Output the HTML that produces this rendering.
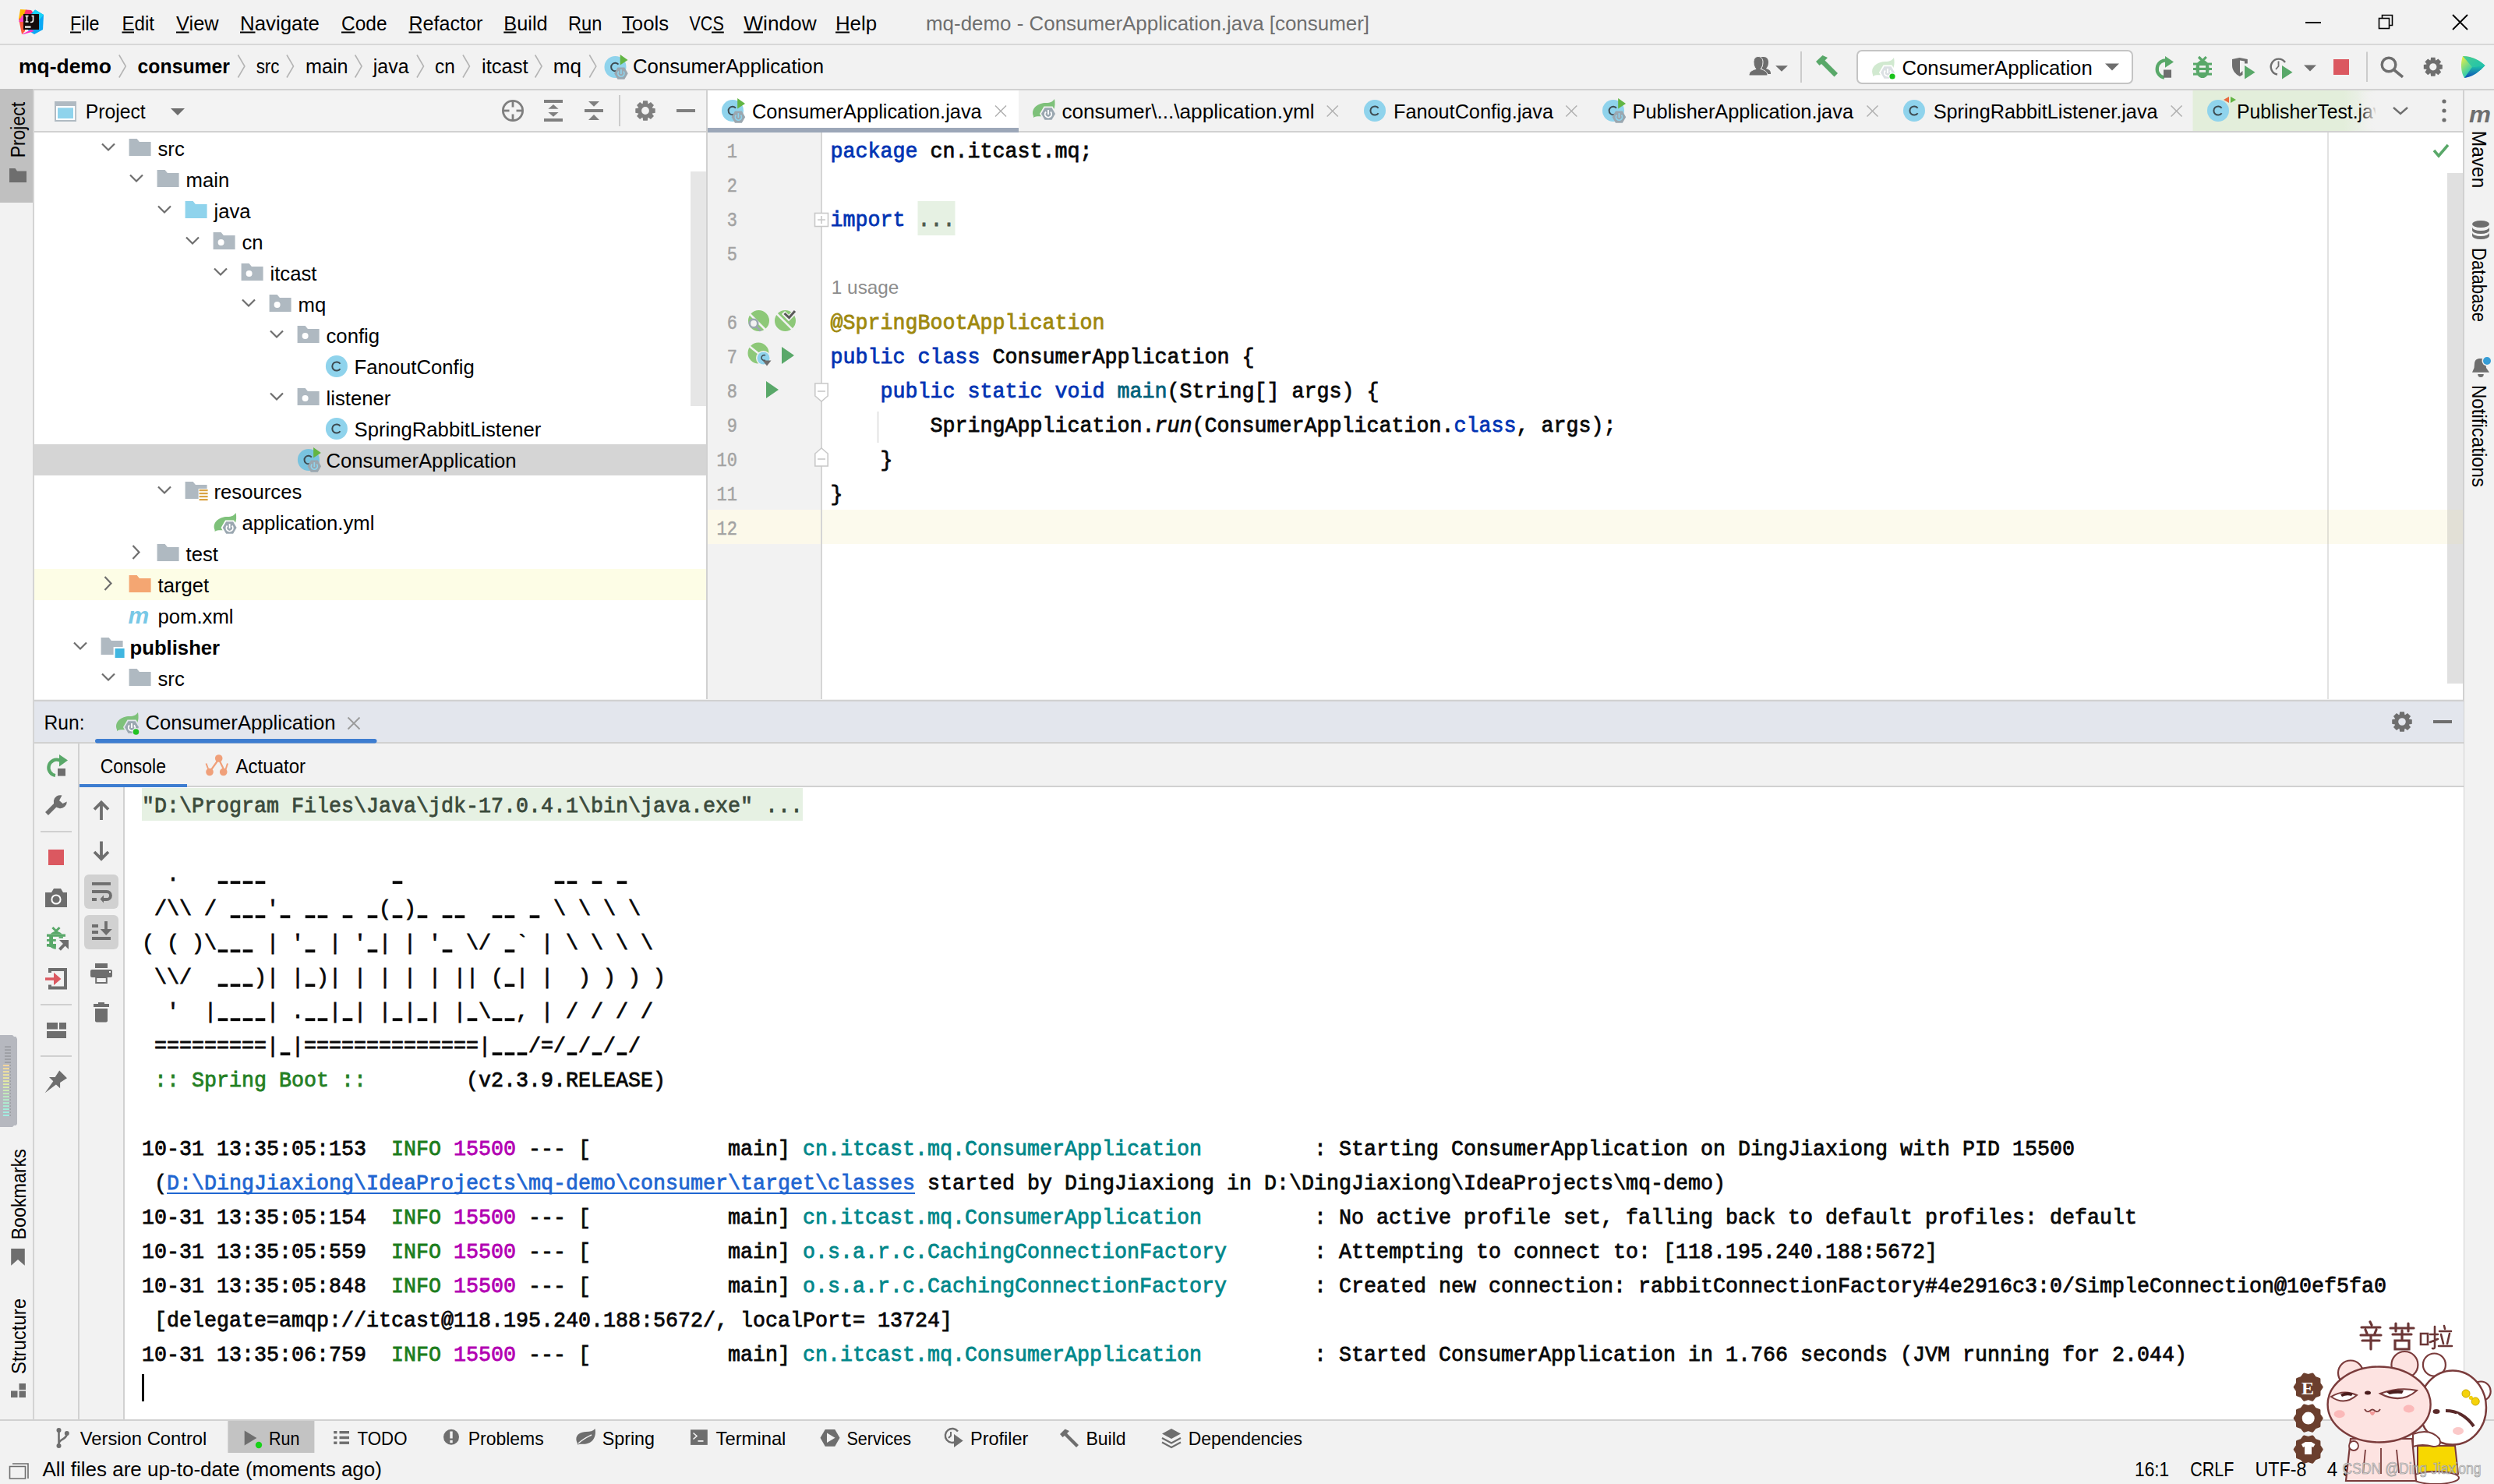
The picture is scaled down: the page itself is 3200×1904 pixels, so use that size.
<!DOCTYPE html>
<html><head><meta charset="utf-8"><title>IDE</title>
<style>html,body{margin:0;padding:0;width:3200px;height:1904px;overflow:hidden;background:#f2f2f2}svg{display:block}</style>
</head><body><svg width="3200" height="1904" viewBox="0 0 3200 1904"><rect x="0" y="0" width="3200" height="1904" fill="#f2f2f2" />
<rect x="0" y="56" width="3200" height="2" fill="#d7d7d7" />
<rect x="0" y="114" width="3200" height="2" fill="#d1d1d1" />
<polygon points="26,12 34,12.5 33,24 24,24" fill="#ffb800"/>
<polygon points="24,24 33,22 32,40 28,44" fill="#ff5a3c"/>
<polygon points="33,12.5 40,13 44,18 30,21" fill="#ff2d6f"/>
<polygon points="28,20 36,18 33,28 24,28" fill="#ff3bd4" opacity="0.9"/>
<polygon points="45,12.5 56,19 55,38 44,44 36,39 38,20" fill="#0aa8f5"/>
<polygon points="45,12.5 56,19 50,26 40,20" fill="#18d3f5"/>
<polygon points="28,44 40,38 44,40 30,44" fill="#ff2dc0"/>
<rect x="30" y="18" width="20" height="20" fill="#140a0a"/>
<path d="M32.5,20.5 h4 M34.5,20.5 v7.5 M32.5,28 h4 M40.5,20.5 h3 M42.5,20.5 v5.5 q0,2.5 -2.5,2.5 h-1" stroke="#fff" stroke-width="1.6" fill="none"/>
<rect x="32" y="33.5" width="7.5" height="2.2" fill="#fff"/>
<text x="90" y="38.5" font-size="26" fill="#000" font-family="'Liberation Sans', sans-serif" textLength="37.5" lengthAdjust="spacingAndGlyphs" >File</text>
<text x="156.4" y="38.5" font-size="26" fill="#000" font-family="'Liberation Sans', sans-serif" textLength="41.6" lengthAdjust="spacingAndGlyphs" >Edit</text>
<text x="226" y="38.5" font-size="26" fill="#000" font-family="'Liberation Sans', sans-serif" textLength="54.6" lengthAdjust="spacingAndGlyphs" >View</text>
<text x="308" y="38.5" font-size="26" fill="#000" font-family="'Liberation Sans', sans-serif" textLength="102" lengthAdjust="spacingAndGlyphs" >Navigate</text>
<text x="438" y="38.5" font-size="26" fill="#000" font-family="'Liberation Sans', sans-serif" textLength="58.6" lengthAdjust="spacingAndGlyphs" >Code</text>
<text x="524.5" y="38.5" font-size="26" fill="#000" font-family="'Liberation Sans', sans-serif" textLength="94.8" lengthAdjust="spacingAndGlyphs" >Refactor</text>
<text x="646.3" y="38.5" font-size="26" fill="#000" font-family="'Liberation Sans', sans-serif" textLength="56.3" lengthAdjust="spacingAndGlyphs" >Build</text>
<text x="729" y="38.5" font-size="26" fill="#000" font-family="'Liberation Sans', sans-serif" textLength="43.4" lengthAdjust="spacingAndGlyphs" >Run</text>
<text x="798" y="38.5" font-size="26" fill="#000" font-family="'Liberation Sans', sans-serif" textLength="60" lengthAdjust="spacingAndGlyphs" >Tools</text>
<text x="884.5" y="38.5" font-size="26" fill="#000" font-family="'Liberation Sans', sans-serif" textLength="44.3" lengthAdjust="spacingAndGlyphs" >VCS</text>
<text x="954.3" y="38.5" font-size="26" fill="#000" font-family="'Liberation Sans', sans-serif" textLength="93.3" lengthAdjust="spacingAndGlyphs" >Window</text>
<text x="1072" y="38.5" font-size="26" fill="#000" font-family="'Liberation Sans', sans-serif" textLength="53" lengthAdjust="spacingAndGlyphs" >Help</text>
<rect x="90" y="40.5" width="14" height="2" fill="#000" />
<rect x="156.5" y="40.5" width="15.5" height="2" fill="#000" />
<rect x="226" y="40.5" width="16.5" height="2" fill="#000" />
<rect x="308" y="40.5" width="19.5" height="2" fill="#000" />
<rect x="438" y="40.5" width="17.5" height="2" fill="#000" />
<rect x="524.5" y="40.5" width="16.5" height="2" fill="#000" />
<rect x="646.3" y="40.5" width="16.2" height="2" fill="#000" />
<rect x="743" y="40.5" width="15" height="2" fill="#000" />
<rect x="798" y="40.5" width="15.5" height="2" fill="#000" />
<rect x="913" y="40.5" width="15.8" height="2" fill="#000" />
<rect x="954.3" y="40.5" width="24.7" height="2" fill="#000" />
<rect x="1072" y="40.5" width="18" height="2" fill="#000" />
<text x="1188" y="38.5" font-size="26" fill="#6e6e6e" font-family="'Liberation Sans', sans-serif" textLength="569" lengthAdjust="spacingAndGlyphs" >mq-demo - ConsumerApplication.java [consumer]</text>
<rect x="2958" y="28" width="20" height="2" fill="#000" />
<rect x="3052.5" y="23.5" width="13" height="13" fill="none" stroke="#000" stroke-width="1.6"/>
<path d="M3056.5,23.5 v-4 h13 v13 h-4" fill="none" stroke="#000" stroke-width="1.6"/>
<path d="M3147,19 L3166,38 M3166,19 L3147,38" stroke="#000" stroke-width="1.8"/>
<text x="24" y="94" font-size="26" fill="#000" font-family="'Liberation Sans', sans-serif" textLength="119" lengthAdjust="spacingAndGlyphs" font-weight="bold" >mq-demo</text>
<text x="176.6" y="94" font-size="26" fill="#000" font-family="'Liberation Sans', sans-serif" textLength="118.4" lengthAdjust="spacingAndGlyphs" font-weight="bold" >consumer</text>
<text x="328.7" y="94" font-size="26" fill="#000" font-family="'Liberation Sans', sans-serif" textLength="29.8" lengthAdjust="spacingAndGlyphs" >src</text>
<text x="392" y="94" font-size="26" fill="#000" font-family="'Liberation Sans', sans-serif" textLength="54.6" lengthAdjust="spacingAndGlyphs" >main</text>
<text x="478.8" y="94" font-size="26" fill="#000" font-family="'Liberation Sans', sans-serif" textLength="45.7" lengthAdjust="spacingAndGlyphs" >java</text>
<text x="558" y="94" font-size="26" fill="#000" font-family="'Liberation Sans', sans-serif" textLength="25.7" lengthAdjust="spacingAndGlyphs" >cn</text>
<text x="618" y="94" font-size="26" fill="#000" font-family="'Liberation Sans', sans-serif" textLength="59.6" lengthAdjust="spacingAndGlyphs" >itcast</text>
<text x="709.8" y="94" font-size="26" fill="#000" font-family="'Liberation Sans', sans-serif" textLength="36.2" lengthAdjust="spacingAndGlyphs" >mq</text>
<text x="812" y="94" font-size="26" fill="#000" font-family="'Liberation Sans', sans-serif" textLength="245" lengthAdjust="spacingAndGlyphs" >ConsumerApplication</text>
<path d="M152.8,70.5 L161.3,85 L152.8,99.5" fill="none" stroke="#b4b4b4" stroke-width="1.6"/>
<path d="M305.4,70.5 L313.9,85 L305.4,99.5" fill="none" stroke="#b4b4b4" stroke-width="1.6"/>
<path d="M368,70.5 L376.5,85 L368,99.5" fill="none" stroke="#b4b4b4" stroke-width="1.6"/>
<path d="M455.6,70.5 L464.1,85 L455.6,99.5" fill="none" stroke="#b4b4b4" stroke-width="1.6"/>
<path d="M535,70.5 L543.5,85 L535,99.5" fill="none" stroke="#b4b4b4" stroke-width="1.6"/>
<path d="M594,70.5 L602.5,85 L594,99.5" fill="none" stroke="#b4b4b4" stroke-width="1.6"/>
<path d="M686.6,70.5 L695.1,85 L686.6,99.5" fill="none" stroke="#b4b4b4" stroke-width="1.6"/>
<path d="M756.3,70.5 L764.8,85 L756.3,99.5" fill="none" stroke="#b4b4b4" stroke-width="1.6"/>
<circle cx="789.5" cy="86" r="14" fill="#8fd3ec"/>
<path d="M793.5,82.6 A5.3,5.3 0 1 0 793.5,89.4" fill="none" stroke="#3d4a50" stroke-width="2"/>
<polygon points="795.7,70 805.5,77 795.7,83.6" fill="#62b543"/>
<polygon points="805.70,94.20 801.30,101.82 792.50,101.82 788.10,94.20 792.50,86.58 801.30,86.58" fill="#9aa7b0"/>
<path d="M799.9,91.6 A4,4 0 1 1 793.9,91.6" fill="none" stroke="#8fd3ec" stroke-width="1.7"/>
<line x1="796.9" y1="89.1" x2="796.9" y2="95.1" stroke="#8fd3ec" stroke-width="1.7"/>
<rect x="42" y="116" width="2" height="1705" fill="#d4d4d4" />
<rect x="0" y="114" width="42" height="146" fill="#c0c0c0" />
<text x="0" y="0" font-size="25" font-family="Liberation Sans, sans-serif" fill="#000" textLength="71.3" lengthAdjust="spacingAndGlyphs" transform="translate(32.2,202.3) rotate(-90)">Project</text>
<g transform="translate(12,216)"><path d="M0,0 h7.5 l2.5,3.5 h12 v14.5 h-22 z" fill="#6e6e6e"/></g>
<rect x="44" y="116" width="862" height="52" fill="#f3f3f3" />
<rect x="44" y="168" width="862" height="2" fill="#d1d1d1" />
<rect x="44" y="170" width="862" height="727" fill="#ffffff" />
<rect x="906" y="116" width="2" height="781" fill="#d1d1d1" />
<rect x="70" y="130" width="28" height="26" fill="#b0bac2" />
<rect x="72" y="136" width="24.2" height="18" fill="#fff" />
<rect x="74" y="138.3" width="20" height="13.7" fill="#8fd3ec" />
<text x="109.7" y="152" font-size="26" fill="#000" font-family="'Liberation Sans', sans-serif" textLength="77" lengthAdjust="spacingAndGlyphs" >Project</text>
<polygon points="219.0,139.0 237.0,139.0 228,148.0" fill="#6e6e6e"/>
<circle cx="658" cy="142" r="12.6" fill="none" stroke="#7f7f7f" stroke-width="2.8"/>
<path d="M658,129.5 v8" stroke="#7f7f7f" stroke-width="2.8"/>
<path d="M658,146.5 v8" stroke="#7f7f7f" stroke-width="2.8"/>
<path d="M645.5,142 h8" stroke="#7f7f7f" stroke-width="2.8"/>
<path d="M662.5,142 h8" stroke="#7f7f7f" stroke-width="2.8"/>
<rect x="698" y="128" width="24" height="4" fill="#7f7f7f" />
<rect x="698" y="152" width="24" height="4" fill="#7f7f7f" />
<polygon points="703.4,139.8 716.6,139.8 710,134" fill="#7f7f7f"/><polygon points="703.4,144 716.6,144 710,149.8" fill="#7f7f7f"/>
<rect x="750" y="140" width="24" height="4" fill="#7f7f7f" />
<polygon points="755,130 769,130 762,136.8" fill="#7f7f7f"/><polygon points="755,154 769,154 762,147" fill="#7f7f7f"/>
<rect x="794" y="122" width="2" height="40" fill="#cccccc" />
<path d="M840.69,139.16 L840.69,144.84 L837.00,145.39 L836.76,145.97 L838.98,148.96 L834.96,152.98 L831.97,150.76 L831.39,151.00 L830.84,154.69 L825.16,154.69 L824.61,151.00 L824.03,150.76 L821.04,152.98 L817.02,148.96 L819.24,145.97 L819.00,145.39 L815.31,144.84 L815.31,139.16 L819.00,138.61 L819.24,138.03 L817.02,135.04 L821.04,131.02 L824.03,133.24 L824.61,133.00 L825.16,129.31 L830.84,129.31 L831.39,133.00 L831.97,133.24 L834.96,131.02 L838.98,135.04 L836.76,138.03 L837.00,138.61 Z M832.9,142 A4.9,4.9 0 1 0 823.1,142 A4.9,4.9 0 1 0 832.9,142 Z" fill="#7f7f7f" fill-rule="evenodd"/>
<rect x="868" y="140" width="24" height="4" fill="#7f7f7f" />
<path d="M131,184.5 L139,192.5 L147,184.5" fill="none" stroke="#6e6e6e" stroke-width="2.2"/>
<path d="M165.6,178 h10 l3.3,4 h14.7 v18 h-28 z" fill="#afb9c1"/>
<text x="202.5" y="200" font-size="25.7" fill="#000" font-family="'Liberation Sans', sans-serif" >src</text>
<path d="M167,224.5 L175,232.5 L183,224.5" fill="none" stroke="#6e6e6e" stroke-width="2.2"/>
<path d="M201.6,218 h10 l3.3,4 h14.7 v18 h-28 z" fill="#afb9c1"/>
<text x="238.5" y="240" font-size="25.7" fill="#000" font-family="'Liberation Sans', sans-serif" >main</text>
<path d="M203,264.5 L211,272.5 L219,264.5" fill="none" stroke="#6e6e6e" stroke-width="2.2"/>
<path d="M237.6,258 h10 l3.3,4 h14.7 v18 h-28 z" fill="#8fd3ec"/>
<text x="274.5" y="280" font-size="25.7" fill="#000" font-family="'Liberation Sans', sans-serif" >java</text>
<path d="M239,304.5 L247,312.5 L255,304.5" fill="none" stroke="#6e6e6e" stroke-width="2.2"/>
<path d="M273.6,298 h10 l3.3,4 h14.7 v18 h-28 z" fill="#afb9c1"/>
<circle cx="283.6" cy="311" r="4" fill="#fff"/>
<text x="310.5" y="320" font-size="25.7" fill="#000" font-family="'Liberation Sans', sans-serif" >cn</text>
<path d="M275,344.5 L283,352.5 L291,344.5" fill="none" stroke="#6e6e6e" stroke-width="2.2"/>
<path d="M309.6,338 h10 l3.3,4 h14.7 v18 h-28 z" fill="#afb9c1"/>
<circle cx="319.6" cy="351" r="4" fill="#fff"/>
<text x="346.5" y="360" font-size="25.7" fill="#000" font-family="'Liberation Sans', sans-serif" >itcast</text>
<path d="M311,384.5 L319,392.5 L327,384.5" fill="none" stroke="#6e6e6e" stroke-width="2.2"/>
<path d="M345.6,378 h10 l3.3,4 h14.7 v18 h-28 z" fill="#afb9c1"/>
<circle cx="355.6" cy="391" r="4" fill="#fff"/>
<text x="382.5" y="400" font-size="25.7" fill="#000" font-family="'Liberation Sans', sans-serif" >mq</text>
<path d="M347,424.5 L355,432.5 L363,424.5" fill="none" stroke="#6e6e6e" stroke-width="2.2"/>
<path d="M381.6,418 h10 l3.3,4 h14.7 v18 h-28 z" fill="#afb9c1"/>
<circle cx="391.6" cy="431" r="4" fill="#fff"/>
<text x="418.5" y="440" font-size="25.7" fill="#000" font-family="'Liberation Sans', sans-serif" >config</text>
<circle cx="431.90000000000003" cy="470" r="14" fill="#8fd3ec"/>
<path d="M436.50000000000006,466.8 A5.6,5.6 0 1 0 436.50000000000006,473.2" fill="none" stroke="#3d4a50" stroke-width="2"/>
<text x="454.5" y="480" font-size="25.7" fill="#000" font-family="'Liberation Sans', sans-serif" >FanoutConfig</text>
<path d="M347,504.5 L355,512.5 L363,504.5" fill="none" stroke="#6e6e6e" stroke-width="2.2"/>
<path d="M381.6,498 h10 l3.3,4 h14.7 v18 h-28 z" fill="#afb9c1"/>
<circle cx="391.6" cy="511" r="4" fill="#fff"/>
<text x="418.5" y="520" font-size="25.7" fill="#000" font-family="'Liberation Sans', sans-serif" >listener</text>
<circle cx="431.90000000000003" cy="550" r="14" fill="#8fd3ec"/>
<path d="M436.50000000000006,546.8 A5.6,5.6 0 1 0 436.50000000000006,553.2" fill="none" stroke="#3d4a50" stroke-width="2"/>
<text x="454.5" y="560" font-size="25.7" fill="#000" font-family="'Liberation Sans', sans-serif" >SpringRabbitListener</text>
<rect x="44" y="570" width="862" height="40" fill="#d5d5d5" />
<circle cx="395.90000000000003" cy="590" r="14" fill="#79c3df"/>
<path d="M399.90000000000003,586.6 A5.3,5.3 0 1 0 399.90000000000003,593.4" fill="none" stroke="#3d4a50" stroke-width="2"/>
<polygon points="402.1,574 411.90000000000003,581 402.1,587.6" fill="#62b543"/>
<polygon points="412.10,598.20 407.70,605.82 398.90,605.82 394.50,598.20 398.90,590.58 407.70,590.58" fill="#9aa7b0"/>
<path d="M406.3,595.6 A4,4 0 1 1 400.3,595.6" fill="none" stroke="#8fd3ec" stroke-width="1.7"/>
<line x1="403.3" y1="593.1" x2="403.3" y2="599.1" stroke="#8fd3ec" stroke-width="1.7"/>
<text x="418.5" y="600" font-size="25.7" fill="#000" font-family="'Liberation Sans', sans-serif" >ConsumerApplication</text>
<path d="M203,624.5 L211,632.5 L219,624.5" fill="none" stroke="#6e6e6e" stroke-width="2.2"/>
<path d="M237.6,618 h10 l3.3,4 h14.7 v18 h-28 z" fill="#afb9c1"/>
<rect x="254.6" y="627" width="13" height="16" fill="#fff"/>
<rect x="255.6" y="628" width="11" height="2.2" fill="#d9a343"/>
<rect x="255.6" y="632" width="11" height="2.2" fill="#d9a343"/>
<rect x="255.6" y="636" width="11" height="2.2" fill="#d9a343"/>
<rect x="255.6" y="640" width="11" height="2.2" fill="#d9a343"/>
<text x="274.5" y="640" font-size="25.7" fill="#000" font-family="'Liberation Sans', sans-serif" >resources</text>
<path d="M275.6,680 C271.6,670 281.6,663 291.6,663 C297.6,663 300.6,661 302.6,658 C304.6,668 301.6,678 291.6,680 C285.6,681 279.6,679 275.6,682 Z" fill="#7ec17a"/>
<polygon points="303.60,677.00 299.10,684.79 290.10,684.79 285.60,677.00 290.10,669.21 299.10,669.21" fill="#fff" stroke="#fff" stroke-width="3.5"/>
<polygon points="303.60,677.00 299.10,684.79 290.10,684.79 285.60,677.00 290.10,669.21 299.10,669.21" fill="#9aa7b0"/>
<path d="M297.6,674.5 A4.2,4.2 0 1 1 291.6,674.5" fill="none" stroke="#fff" stroke-width="1.8"/>
<line x1="294.6" y1="672.0" x2="294.6" y2="678.0" stroke="#fff" stroke-width="1.8"/>
<text x="310.5" y="680" font-size="25.7" fill="#000" font-family="'Liberation Sans', sans-serif" >application.yml</text>
<path d="M170.5,700.0 L178.5,708.5 L170.5,717.0" fill="none" stroke="#6e6e6e" stroke-width="2.2"/>
<path d="M201.6,698 h10 l3.3,4 h14.7 v18 h-28 z" fill="#afb9c1"/>
<text x="238.5" y="720" font-size="25.7" fill="#000" font-family="'Liberation Sans', sans-serif" >test</text>
<rect x="44" y="730" width="862" height="40" fill="#fdfde6" />
<path d="M134.5,740.0 L142.5,748.5 L134.5,757.0" fill="none" stroke="#6e6e6e" stroke-width="2.2"/>
<path d="M165.6,738 h10 l3.3,4 h14.7 v18 h-28 z" fill="#f4a672"/>
<text x="202.5" y="760" font-size="25.7" fill="#000" font-family="'Liberation Sans', sans-serif" >target</text>
<text x="164.6" y="800" font-size="30" font-weight="bold" font-style="italic" font-family="Liberation Sans, sans-serif" fill="#78c8e6">m</text>
<text x="202.5" y="800" font-size="25.7" fill="#000" font-family="'Liberation Sans', sans-serif" >pom.xml</text>
<path d="M95,824.5 L103,832.5 L111,824.5" fill="none" stroke="#6e6e6e" stroke-width="2.2"/>
<path d="M129.6,818 h10 l3.3,4 h14.7 v18 h-28 z" fill="#afb9c1"/>
<rect x="145.6" y="830" width="15" height="15" fill="#fff"/>
<rect x="147.6" y="832" width="12" height="12" fill="#40b6e0"/>
<text x="166.5" y="840" font-size="25.7" fill="#000" font-family="'Liberation Sans', sans-serif" font-weight="bold" >publisher</text>
<path d="M131,864.5 L139,872.5 L147,864.5" fill="none" stroke="#6e6e6e" stroke-width="2.2"/>
<path d="M165.6,858 h10 l3.3,4 h14.7 v18 h-28 z" fill="#afb9c1"/>
<text x="202.5" y="880" font-size="25.7" fill="#000" font-family="'Liberation Sans', sans-serif" >src</text>
<rect x="886" y="220" width="20" height="301" fill="#e6e6e6" />
<rect x="908" y="116" width="2252" height="52" fill="#f2f2f2" />
<rect x="908" y="168" width="2252" height="2" fill="#d1d1d1" />
<rect x="908" y="116" width="399" height="48" fill="#ffffff" />
<rect x="908" y="164" width="399" height="6" fill="#9ca7b8" />
<rect x="908" y="170" width="145" height="727" fill="#f2f2f2" />
<rect x="1053" y="170" width="2" height="727" fill="#d5d5d5" />
<rect x="1055" y="170" width="2105" height="727" fill="#ffffff" />
<rect x="2986" y="170" width="2" height="727" fill="#e2e2e2" />
<rect x="3160" y="116" width="2" height="1705" fill="#d1d1d1" />
<circle cx="940" cy="142" r="14" fill="#8fd3ec"/>
<path d="M944,138.6 A5.3,5.3 0 1 0 944,145.4" fill="none" stroke="#3d4a50" stroke-width="2"/>
<polygon points="946.2,126 956,133 946.2,139.6" fill="#62b543"/>
<polygon points="956.20,150.20 951.80,157.82 943.00,157.82 938.60,150.20 943.00,142.58 951.80,142.58" fill="#9aa7b0"/>
<path d="M950.4,147.6 A4,4 0 1 1 944.4,147.6" fill="none" stroke="#8fd3ec" stroke-width="1.7"/>
<line x1="947.4" y1="145.1" x2="947.4" y2="151.1" stroke="#8fd3ec" stroke-width="1.7"/>
<text x="965" y="152" font-size="26" fill="#000" font-family="'Liberation Sans', sans-serif" textLength="294.7" lengthAdjust="spacingAndGlyphs" >ConsumerApplication.java</text>
<path d="M1277,135.5 L1291,149.5 M1291,135.5 L1277,149.5" stroke="#b0b0b0" stroke-width="1.5" fill="none"/>
<path d="M1326,149 C1322,139 1332,132 1342,132 C1348,132 1351,130 1353,127 C1355,137 1352,147 1342,149 C1336,150 1330,148 1326,151 Z" fill="#7ec17a"/>
<polygon points="1354.00,146.00 1349.50,153.79 1340.50,153.79 1336.00,146.00 1340.50,138.21 1349.50,138.21" fill="#f2f2f2" stroke="#f2f2f2" stroke-width="3.5"/>
<polygon points="1354.00,146.00 1349.50,153.79 1340.50,153.79 1336.00,146.00 1340.50,138.21 1349.50,138.21" fill="#9aa7b0"/>
<path d="M1348,143.5 A4.2,4.2 0 1 1 1342,143.5" fill="none" stroke="#fff" stroke-width="1.8"/>
<line x1="1345" y1="141.0" x2="1345" y2="147.0" stroke="#fff" stroke-width="1.8"/>
<text x="1362.4" y="152" font-size="26" fill="#000" font-family="'Liberation Sans', sans-serif" textLength="324.2" lengthAdjust="spacingAndGlyphs" >consumer\...\application.yml</text>
<path d="M1702.7,135.5 L1716.7,149.5 M1716.7,135.5 L1702.7,149.5" stroke="#b0b0b0" stroke-width="1.5" fill="none"/>
<circle cx="1764" cy="142" r="14" fill="#8fd3ec"/>
<path d="M1768.6,138.8 A5.6,5.6 0 1 0 1768.6,145.2" fill="none" stroke="#3d4a50" stroke-width="2"/>
<text x="1788" y="152" font-size="26" fill="#000" font-family="'Liberation Sans', sans-serif" textLength="205" lengthAdjust="spacingAndGlyphs" >FanoutConfig.java</text>
<path d="M2009.3,135.5 L2023.3,149.5 M2023.3,135.5 L2009.3,149.5" stroke="#b0b0b0" stroke-width="1.5" fill="none"/>
<circle cx="2070" cy="142" r="14" fill="#8fd3ec"/>
<path d="M2074,138.6 A5.3,5.3 0 1 0 2074,145.4" fill="none" stroke="#3d4a50" stroke-width="2"/>
<polygon points="2076.2,126 2086,133 2076.2,139.6" fill="#62b543"/>
<polygon points="2086.20,150.20 2081.80,157.82 2073.00,157.82 2068.60,150.20 2073.00,142.58 2081.80,142.58" fill="#9aa7b0"/>
<path d="M2080.4,147.6 A4,4 0 1 1 2074.4,147.6" fill="none" stroke="#8fd3ec" stroke-width="1.7"/>
<line x1="2077.4" y1="145.1" x2="2077.4" y2="151.1" stroke="#8fd3ec" stroke-width="1.7"/>
<text x="2094.6" y="152" font-size="26" fill="#000" font-family="'Liberation Sans', sans-serif" textLength="283.4" lengthAdjust="spacingAndGlyphs" >PublisherApplication.java</text>
<path d="M2395.5,135.5 L2409.5,149.5 M2409.5,135.5 L2395.5,149.5" stroke="#b0b0b0" stroke-width="1.5" fill="none"/>
<circle cx="2456" cy="142" r="14" fill="#8fd3ec"/>
<path d="M2460.6,138.8 A5.6,5.6 0 1 0 2460.6,145.2" fill="none" stroke="#3d4a50" stroke-width="2"/>
<text x="2480.7" y="152" font-size="26" fill="#000" font-family="'Liberation Sans', sans-serif" textLength="287.9" lengthAdjust="spacingAndGlyphs" >SpringRabbitListener.java</text>
<path d="M2785.6,135.5 L2799.6,149.5 M2799.6,135.5 L2785.6,149.5" stroke="#b0b0b0" stroke-width="1.5" fill="none"/>
<defs><linearGradient id="tfade" x1="0" x2="1" y1="0" y2="0"><stop offset="0" stop-color="#e3eedb" stop-opacity="1"/><stop offset="0.82" stop-color="#e3eedb" stop-opacity="1"/><stop offset="1" stop-color="#f2f2f2" stop-opacity="1"/></linearGradient><linearGradient id="tfade2" x1="0" x2="1"><stop offset="0" stop-color="#f2f2f2" stop-opacity="0"/><stop offset="1" stop-color="#f2f2f2" stop-opacity="1"/></linearGradient></defs>
<rect x="2813.5" y="116" width="236" height="52" fill="url(#tfade)" />
<circle cx="2846" cy="142" r="14" fill="#8fd3ec"/>
<path d="M2850.6,138.8 A5.6,5.6 0 1 0 2850.6,145.2" fill="none" stroke="#3d4a50" stroke-width="2"/>
<polygon points="2853,128 2860,124 2860,132" fill="#e8693e"/><polygon points="2862,124 2869,128 2862,132" fill="#62b543"/>
<text x="2870" y="152" font-size="26" fill="#000" font-family="'Liberation Sans', sans-serif" textLength="201" lengthAdjust="spacingAndGlyphs" >PublisherTest.java</text>
<rect x="3026" y="118" width="24" height="48" fill="url(#tfade2)" />
<rect x="3048" y="116" width="112" height="52" fill="#f2f2f2" />
<path d="M3071,138 L3080,146 L3089,138" fill="none" stroke="#6e6e6e" stroke-width="2.4"/>
<circle cx="3136" cy="130" r="2.6" fill="#6e6e6e"/>
<circle cx="3136" cy="142" r="2.6" fill="#6e6e6e"/>
<circle cx="3136" cy="154" r="2.6" fill="#6e6e6e"/>
<path d="M3123,193 L3129,200 L3141,186" fill="none" stroke="#59a869" stroke-width="3.5"/>
<rect x="3140" y="222" width="20" height="655" fill="#e0e0e0" />
<rect x="908" y="654" width="145" height="44" fill="#fcf9ea" />
<rect x="1055" y="654" width="2085" height="44" fill="#fcfaed" />
<rect x="3140" y="654" width="20" height="44" fill="#e2e0d6" />
<rect x="2986" y="654" width="2" height="44" fill="#e2e0d6" />
<text x="932.8" y="201.7" font-size="26" fill="#a3a3a3" font-family="'Liberation Mono', monospace" textLength="13.2" lengthAdjust="spacingAndGlyphs" stroke="#a3a3a3" stroke-width="0.5">1</text>
<text x="932.8" y="245.7" font-size="26" fill="#a3a3a3" font-family="'Liberation Mono', monospace" textLength="13.2" lengthAdjust="spacingAndGlyphs" stroke="#a3a3a3" stroke-width="0.5">2</text>
<text x="932.8" y="289.7" font-size="26" fill="#a3a3a3" font-family="'Liberation Mono', monospace" textLength="13.2" lengthAdjust="spacingAndGlyphs" stroke="#a3a3a3" stroke-width="0.5">3</text>
<text x="932.8" y="333.7" font-size="26" fill="#a3a3a3" font-family="'Liberation Mono', monospace" textLength="13.2" lengthAdjust="spacingAndGlyphs" stroke="#a3a3a3" stroke-width="0.5">5</text>
<text x="932.8" y="421.7" font-size="26" fill="#a3a3a3" font-family="'Liberation Mono', monospace" textLength="13.2" lengthAdjust="spacingAndGlyphs" stroke="#a3a3a3" stroke-width="0.5">6</text>
<text x="932.8" y="465.7" font-size="26" fill="#a3a3a3" font-family="'Liberation Mono', monospace" textLength="13.2" lengthAdjust="spacingAndGlyphs" stroke="#a3a3a3" stroke-width="0.5">7</text>
<text x="932.8" y="509.7" font-size="26" fill="#a3a3a3" font-family="'Liberation Mono', monospace" textLength="13.2" lengthAdjust="spacingAndGlyphs" stroke="#a3a3a3" stroke-width="0.5">8</text>
<text x="932.8" y="553.7" font-size="26" fill="#a3a3a3" font-family="'Liberation Mono', monospace" textLength="13.2" lengthAdjust="spacingAndGlyphs" stroke="#a3a3a3" stroke-width="0.5">9</text>
<text x="919.6" y="597.7" font-size="26" fill="#a3a3a3" font-family="'Liberation Mono', monospace" textLength="26.4" lengthAdjust="spacingAndGlyphs" stroke="#a3a3a3" stroke-width="0.5">10</text>
<text x="919.6" y="641.7" font-size="26" fill="#a3a3a3" font-family="'Liberation Mono', monospace" textLength="26.4" lengthAdjust="spacingAndGlyphs" stroke="#a3a3a3" stroke-width="0.5">11</text>
<text x="919.6" y="685.7" font-size="26" fill="#a3a3a3" font-family="'Liberation Mono', monospace" textLength="26.4" lengthAdjust="spacingAndGlyphs" stroke="#a3a3a3" stroke-width="0.5">12</text>
<text x="1065.50" y="202" font-size="28.5" font-family="'Liberation Mono', monospace" fill="#0033b3" stroke="#0033b3" stroke-width="0.8" textLength="112.00" lengthAdjust="spacingAndGlyphs" xml:space="preserve" >package</text>
<text x="1177.50" y="202" font-size="28.5" font-family="'Liberation Mono', monospace" fill="#080808" stroke="#080808" stroke-width="0.8" textLength="224.00" lengthAdjust="spacingAndGlyphs" xml:space="preserve" > cn.itcast.mq;</text>
<rect x="1177.5" y="258" width="48.0" height="44" fill="#e6f1e3" />
<text x="1065.50" y="290" font-size="28.5" font-family="'Liberation Mono', monospace" fill="#0033b3" stroke="#0033b3" stroke-width="0.8" textLength="96.00" lengthAdjust="spacingAndGlyphs" xml:space="preserve" >import</text>
<text x="1177.50" y="290" font-size="28.5" font-family="'Liberation Mono', monospace" fill="#4d5a4d" stroke="#4d5a4d" stroke-width="0.8" textLength="48.00" lengthAdjust="spacingAndGlyphs" xml:space="preserve" >...</text>
<text x="1066.8" y="376.6" font-size="24" fill="#8c8c8c" font-family="'Liberation Sans', sans-serif" textLength="86.6" lengthAdjust="spacingAndGlyphs" >1 usage</text>
<text x="1065.50" y="422" font-size="28.5" font-family="'Liberation Mono', monospace" fill="#9e880d" stroke="#9e880d" stroke-width="0.8" textLength="352.00" lengthAdjust="spacingAndGlyphs" xml:space="preserve" >@SpringBootApplication</text>
<text x="1065.50" y="466" font-size="28.5" font-family="'Liberation Mono', monospace" fill="#0033b3" stroke="#0033b3" stroke-width="0.8" textLength="96.00" lengthAdjust="spacingAndGlyphs" xml:space="preserve" >public</text>
<text x="1177.50" y="466" font-size="28.5" font-family="'Liberation Mono', monospace" fill="#0033b3" stroke="#0033b3" stroke-width="0.8" textLength="80.00" lengthAdjust="spacingAndGlyphs" xml:space="preserve" >class</text>
<text x="1257.50" y="466" font-size="28.5" font-family="'Liberation Mono', monospace" fill="#080808" stroke="#080808" stroke-width="0.8" textLength="352.00" lengthAdjust="spacingAndGlyphs" xml:space="preserve" > ConsumerApplication {</text>
<text x="1129.50" y="510" font-size="28.5" font-family="'Liberation Mono', monospace" fill="#0033b3" stroke="#0033b3" stroke-width="0.8" textLength="96.00" lengthAdjust="spacingAndGlyphs" xml:space="preserve" >public</text>
<text x="1241.50" y="510" font-size="28.5" font-family="'Liberation Mono', monospace" fill="#0033b3" stroke="#0033b3" stroke-width="0.8" textLength="96.00" lengthAdjust="spacingAndGlyphs" xml:space="preserve" >static</text>
<text x="1353.50" y="510" font-size="28.5" font-family="'Liberation Mono', monospace" fill="#0033b3" stroke="#0033b3" stroke-width="0.8" textLength="64.00" lengthAdjust="spacingAndGlyphs" xml:space="preserve" >void</text>
<text x="1433.50" y="510" font-size="28.5" font-family="'Liberation Mono', monospace" fill="#00627a" stroke="#00627a" stroke-width="0.8" textLength="64.00" lengthAdjust="spacingAndGlyphs" xml:space="preserve" >main</text>
<text x="1497.50" y="510" font-size="28.5" font-family="'Liberation Mono', monospace" fill="#080808" stroke="#080808" stroke-width="0.8" textLength="272.00" lengthAdjust="spacingAndGlyphs" xml:space="preserve" >(String[] args) {</text>
<text x="1193.50" y="554" font-size="28.5" font-family="'Liberation Mono', monospace" fill="#080808" stroke="#080808" stroke-width="0.8" textLength="288.00" lengthAdjust="spacingAndGlyphs" xml:space="preserve" >SpringApplication.</text>
<text x="1481.50" y="554" font-size="28.5" font-family="'Liberation Mono', monospace" fill="#080808" stroke="#080808" stroke-width="0.8" textLength="48.00" lengthAdjust="spacingAndGlyphs" xml:space="preserve" font-style="italic">run</text>
<text x="1529.50" y="554" font-size="28.5" font-family="'Liberation Mono', monospace" fill="#080808" stroke="#080808" stroke-width="0.8" textLength="336.00" lengthAdjust="spacingAndGlyphs" xml:space="preserve" >(ConsumerApplication.</text>
<text x="1865.50" y="554" font-size="28.5" font-family="'Liberation Mono', monospace" fill="#0033b3" stroke="#0033b3" stroke-width="0.8" textLength="80.00" lengthAdjust="spacingAndGlyphs" xml:space="preserve" >class</text>
<text x="1945.50" y="554" font-size="28.5" font-family="'Liberation Mono', monospace" fill="#080808" stroke="#080808" stroke-width="0.8" textLength="128.00" lengthAdjust="spacingAndGlyphs" xml:space="preserve" >, args);</text>
<text x="1129.50" y="598" font-size="28.5" font-family="'Liberation Mono', monospace" fill="#080808" stroke="#080808" stroke-width="0.8" textLength="16.00" lengthAdjust="spacingAndGlyphs" xml:space="preserve" >}</text>
<text x="1065.50" y="642" font-size="28.5" font-family="'Liberation Mono', monospace" fill="#080808" stroke="#080808" stroke-width="0.8" textLength="16.00" lengthAdjust="spacingAndGlyphs" xml:space="preserve" >}</text>
<rect x="1125.5" y="528" width="2" height="40" fill="#e3e3e3" />
<rect x="1045.5" y="273.5" width="17" height="17" fill="#fff" stroke="#c8c8c8" stroke-width="1.6"/><path d="M1049,282 h10 M1054,277 v10" stroke="#c8c8c8" stroke-width="1.6"/>
<path d="M1045.8,492 h16.4 v16 l-8.2,7 l-8.2,-7 z" fill="#fff" stroke="#c8c8c8" stroke-width="1.6"/><path d="M1049,502 h10" stroke="#c8c8c8" stroke-width="1.6"/>
<path d="M1045.8,598 h16.4 v-16 l-8.2,-7 l-8.2,7 z" fill="#fff" stroke="#c8c8c8" stroke-width="1.6"/><path d="M1049,589 h10" stroke="#c8c8c8" stroke-width="1.6"/>
<ellipse cx="973.5" cy="411.5" rx="13.5" ry="13.5" fill="#8dc878" transform="rotate(45 973.5 411.5)"/>
<path d="M959,400 L986,427" stroke="#f2f2f2" stroke-width="2.6"/>
<circle cx="967" cy="415" r="5.8" fill="#f2f2f2"/><circle cx="967" cy="415" r="5.2" fill="none" stroke="#9aa7b0" stroke-width="2.6"/><path d="M970.5,419 L976,424.5" stroke="#9aa7b0" stroke-width="3"/>
<ellipse cx="1007.5" cy="411.5" rx="13.5" ry="13.5" fill="#8dc878" transform="rotate(45 1007.5 411.5)"/>
<path d="M994,400 L1020,426" stroke="#f2f2f2" stroke-width="2.6"/>
<path d="M1005,401 L1012,408 L1022,398" fill="none" stroke="#f2f2f2" stroke-width="6"/><path d="M1006.5,402 L1012.5,407.5 L1020,399" fill="none" stroke="#595959" stroke-width="3"/>
<ellipse cx="973" cy="453" rx="13.5" ry="13.5" fill="#8dc878" transform="rotate(45 973 453)"/>
<path d="M960,443 L975,455" stroke="#f2f2f2" stroke-width="2.6"/>
<circle cx="979.5" cy="459.5" r="9.5" fill="#f2f2f2"/><circle cx="979.5" cy="459.5" r="8" fill="#8fd3ec"/>
<path d="M982,456 A3.4,3.4 0 1 0 982,462" fill="none" stroke="#3d4a50" stroke-width="1.5"/><polygon points="978.5,462.5 989.5,462.5 984,469.5" fill="#6e6e6e"/>
<polygon points="1003,445 1019,456 1003,467" fill="#59a869"/>
<polygon points="983,489 999,500 983,511" fill="#59a869"/>
<rect x="44" y="898" width="3117" height="2" fill="#d1d1d1" />
<rect x="44" y="900" width="3117" height="52" fill="#e3e6ed" />
<rect x="44" y="952" width="3117" height="2" fill="#d1d1d1" />
<rect x="44" y="954" width="3117" height="867" fill="#f2f2f2" />
<rect x="100" y="954" width="2" height="867" fill="#d1d1d1" />
<rect x="102" y="1008" width="3059" height="2" fill="#d1d1d1" />
<rect x="158" y="1010" width="2" height="811" fill="#d1d1d1" />
<rect x="160" y="1010" width="3001" height="811" fill="#ffffff" />
<rect x="0" y="1821" width="3200" height="2" fill="#d1d1d1" />
<text x="56.5" y="935.7" font-size="26" fill="#000" font-family="'Liberation Sans', sans-serif" textLength="52" lengthAdjust="spacingAndGlyphs" >Run:</text>
<path d="M150,936 C146,926 156,919 166,919 C172,919 175,917 177,914 C179,924 176,934 166,936 C160,937 154,935 150,938 Z" fill="#7ec17a"/>
<polygon points="178.00,933.00 173.50,940.79 164.50,940.79 160.00,933.00 164.50,925.21 173.50,925.21" fill="#e3e6ed" stroke="#e3e6ed" stroke-width="3.5"/>
<polygon points="178.00,933.00 173.50,940.79 164.50,940.79 160.00,933.00 164.50,925.21 173.50,925.21" fill="#9aa7b0"/>
<path d="M172,930.5 A4.2,4.2 0 1 1 166,930.5" fill="none" stroke="#fff" stroke-width="1.8"/>
<line x1="169" y1="928.0" x2="169" y2="934.0" stroke="#fff" stroke-width="1.8"/>
<circle cx="174.5" cy="939" r="5" fill="#e3e6ed"/><circle cx="174.5" cy="939" r="3.8" fill="#22c322"/>
<text x="186.4" y="935.7" font-size="26" fill="#000" font-family="'Liberation Sans', sans-serif" textLength="244.2" lengthAdjust="spacingAndGlyphs" >ConsumerApplication</text>
<path d="M446.5,920.5 L461.5,935.5 M461.5,920.5 L446.5,935.5" stroke="#9a9a9a" stroke-width="1.8" fill="none"/>
<rect x="122" y="948" width="361.5" height="5.5" rx="2.75" fill="#3d7dd0"/>
<path d="M3094.78,923.14 L3094.78,928.86 L3091.07,929.41 L3090.83,930.00 L3093.06,933.02 L3089.02,937.06 L3086.00,934.83 L3085.41,935.07 L3084.86,938.78 L3079.14,938.78 L3078.59,935.07 L3078.00,934.83 L3074.98,937.06 L3070.94,933.02 L3073.17,930.00 L3072.93,929.41 L3069.22,928.86 L3069.22,923.14 L3072.93,922.59 L3073.17,922.00 L3070.94,918.98 L3074.98,914.94 L3078.00,917.17 L3078.59,916.93 L3079.14,913.22 L3084.86,913.22 L3085.41,916.93 L3086.00,917.17 L3089.02,914.94 L3093.06,918.98 L3090.83,922.00 L3091.07,922.59 Z M3086.8,926 A4.8,4.8 0 1 0 3077.2,926 A4.8,4.8 0 1 0 3086.8,926 Z" fill="#6e6e6e" fill-rule="evenodd"/>
<rect x="3122" y="924" width="24" height="4" fill="#6e6e6e" />
<text x="128.7" y="992" font-size="26" fill="#000" font-family="'Liberation Sans', sans-serif" textLength="84.3" lengthAdjust="spacingAndGlyphs" >Console</text>
<rect x="102" y="1006" width="138" height="4" fill="#3d7dd0" />
<path d="M270,989 L280.7,974 L288,989" fill="none" stroke="#f0a07a" stroke-width="2.2"/><path d="M264.5,979.5 L268,989 M292,979.5 L289,989" stroke="#f0a07a" stroke-width="2"/>
<circle cx="280.7" cy="973" r="4.8" fill="#f0a07a"/><circle cx="269" cy="990.5" r="4.8" fill="#f0a07a"/><circle cx="286.7" cy="990.5" r="4.8" fill="#f0a07a"/>
<text x="302.6" y="992" font-size="26" fill="#000" font-family="'Liberation Sans', sans-serif" textLength="89.4" lengthAdjust="spacingAndGlyphs" >Actuator</text>
<path d="M71,995 A10.2,10.2 0 1 1 76.5,975.5" fill="none" stroke="#59a869" stroke-width="4.3"/>
<polygon points="76,968 87,975.6 76,983.6" fill="#59a869"/>
<rect x="74" y="986" width="10" height="9.6" fill="#6e6e6e" />
<path d="M60,1044 L73,1031" stroke="#6e6e6e" stroke-width="5.5" stroke-linecap="butt"/>
<path d="M79.5,1020.5 A8.5,8.5 0 1 0 85.8,1028.5 L80.5,1031 L76,1027 L79.5,1020.5 Z" fill="#6e6e6e"/>
<rect x="52" y="1066" width="40" height="2" fill="#d0d0d0" />
<rect x="62" y="1090" width="20" height="20" fill="#db5860" />
<path d="M58,1145 h8 l3,-5 h9 l3,5 h5 v19 h-28 z" fill="#6e6e6e"/><circle cx="72" cy="1154" r="5.6" fill="none" stroke="#fff" stroke-width="2"/>
<path d="M64.6,1198.5 Q72,1191 79.6,1198.5 Z" fill="#59a869"/>
<rect x="60" y="1198.5" width="24" height="3.3" fill="#59a869" />
<rect x="75.6" y="1201.5" width="5.3" height="2.3" fill="#59a869" />
<rect x="63.2" y="1201" width="4.8" height="14" fill="#59a869" />
<rect x="60" y="1205" width="11.8" height="2.8" fill="#59a869" />
<rect x="60" y="1211" width="11.8" height="3.6" fill="#59a869" />
<path d="M64,1214.6 Q67,1217.7 71.8,1217.7 V1211 H64 Z" fill="#59a869"/>
<path d="M67.4,1190 L72,1194.5 L76.5,1190" fill="none" stroke="#59a869" stroke-width="3"/>
<path d="M76.5,1218.4 L83,1211.5" stroke="#6e6e6e" stroke-width="4"/><polygon points="76,1206 88,1206 88,1218" fill="#6e6e6e"/>
<path d="M62,1248 v-6 h24 v27.5 h-24 v-6 h4 v2 h16 v-19.5 h-16 v2 z" fill="#6e6e6e"/>
<path d="M58,1256 h12" stroke="#db5860" stroke-width="3.5"/><polygon points="69,1247.8 78.4,1256 69,1264" fill="#db5860"/>
<rect x="52" y="1288" width="40" height="2" fill="#d0d0d0" />
<rect x="60" y="1312" width="14" height="8.5" fill="#6e6e6e" />
<rect x="76" y="1312" width="9" height="8.5" fill="#6e6e6e" />
<rect x="60" y="1323" width="25" height="9" fill="#6e6e6e" />
<rect x="52" y="1354" width="40" height="2" fill="#d0d0d0" />
<polygon points="76.2,1373.6 86,1383.3 77.1,1389 77.1,1396.2 71.9,1391.4 57.7,1402.3 68.3,1387.3 63,1382 70.7,1382" fill="#6e6e6e"/>
<path d="M130,1052 V1030 M121,1038.5 L130,1029.5 L139,1038.5" fill="none" stroke="#6e6e6e" stroke-width="3.8"/>
<path d="M130,1079.5 V1101.5 M121,1093 L130,1102 L139,1093" fill="none" stroke="#6e6e6e" stroke-width="3.8"/>
<rect x="108" y="1122" width="44" height="44" rx="6" fill="#d1d1d1"/><rect x="108" y="1174" width="44" height="44" rx="6" fill="#d1d1d1"/>
<rect x="118" y="1132" width="24" height="3.8" fill="#6e6e6e" />
<path d="M118,1144 h19 a5,5 0 0 1 0,10 h-5" fill="none" stroke="#6e6e6e" stroke-width="3.8"/><polygon points="128.5,1153.5 133,1148.5 133,1158.5" fill="#6e6e6e"/>
<rect x="118" y="1152" width="6" height="4" fill="#6e6e6e" />
<rect x="118" y="1186" width="8" height="4" fill="#6e6e6e" />
<rect x="118" y="1194" width="8" height="4" fill="#6e6e6e" />
<rect x="118" y="1202" width="24" height="4" fill="#6e6e6e" />
<path d="M136,1182 V1196" stroke="#6e6e6e" stroke-width="3.8"/><polygon points="128.7,1192 143.8,1192 136.2,1200" fill="#6e6e6e"/>
<rect x="122" y="1236" width="16" height="6" fill="#6e6e6e" />
<rect x="116" y="1244" width="28" height="10" rx="2" fill="#6e6e6e"/><rect x="123.2" y="1254" width="13.6" height="7" fill="none" stroke="#6e6e6e" stroke-width="2"/><rect x="140" y="1246" width="2" height="2" fill="#fff"/>
<rect x="120" y="1288" width="20" height="4" fill="#6e6e6e" />
<rect x="126" y="1286" width="8" height="3" fill="#6e6e6e" />
<path d="M122,1294 h16 v15.5 a2,2 0 0 1 -2,2 h-12 a2,2 0 0 1 -2,-2 z" fill="#6e6e6e"/>
<rect x="182.0" y="1011" width="848.0" height="42" fill="#e6f1e3" />
<text x="182.00" y="1042" font-size="28.5" font-family="'Liberation Mono', monospace" fill="#3b4a3b" stroke="#3b4a3b" stroke-width="0.8" textLength="848.00" lengthAdjust="spacingAndGlyphs" xml:space="preserve">&quot;D:\Program Files\Java\jdk-17.0.4.1\bin\java.exe&quot; ...</text>
<rect x="279.7" y="1130.3" width="12.6" height="3.8" fill="#080808" />
<rect x="295.7" y="1130.3" width="12.6" height="3.8" fill="#080808" />
<rect x="311.7" y="1130.3" width="12.6" height="3.8" fill="#080808" />
<rect x="327.7" y="1130.3" width="12.6" height="3.8" fill="#080808" />
<rect x="503.7" y="1130.3" width="12.6" height="3.8" fill="#080808" />
<rect x="711.7" y="1130.3" width="12.6" height="3.8" fill="#080808" />
<rect x="727.7" y="1130.3" width="12.6" height="3.8" fill="#080808" />
<rect x="759.7" y="1130.3" width="12.6" height="3.8" fill="#080808" />
<rect x="791.7" y="1130.3" width="12.6" height="3.8" fill="#080808" />
<text x="214.00" y="1130" font-size="28.5" font-family="'Liberation Mono', monospace" fill="#080808" stroke="#080808" stroke-width="0.8" textLength="16.00" lengthAdjust="spacingAndGlyphs" xml:space="preserve">.</text>
<rect x="295.7" y="1174.3" width="12.6" height="3.8" fill="#080808" />
<rect x="311.7" y="1174.3" width="12.6" height="3.8" fill="#080808" />
<rect x="327.7" y="1174.3" width="12.6" height="3.8" fill="#080808" />
<rect x="359.7" y="1174.3" width="12.6" height="3.8" fill="#080808" />
<rect x="391.7" y="1174.3" width="12.6" height="3.8" fill="#080808" />
<rect x="407.7" y="1174.3" width="12.6" height="3.8" fill="#080808" />
<rect x="439.7" y="1174.3" width="12.6" height="3.8" fill="#080808" />
<rect x="471.7" y="1174.3" width="12.6" height="3.8" fill="#080808" />
<rect x="503.7" y="1174.3" width="12.6" height="3.8" fill="#080808" />
<rect x="535.7" y="1174.3" width="12.6" height="3.8" fill="#080808" />
<rect x="567.7" y="1174.3" width="12.6" height="3.8" fill="#080808" />
<rect x="583.7" y="1174.3" width="12.6" height="3.8" fill="#080808" />
<rect x="631.7" y="1174.3" width="12.6" height="3.8" fill="#080808" />
<rect x="647.7" y="1174.3" width="12.6" height="3.8" fill="#080808" />
<rect x="679.7" y="1174.3" width="12.6" height="3.8" fill="#080808" />
<text x="198.00" y="1174" font-size="28.5" font-family="'Liberation Mono', monospace" fill="#080808" stroke="#080808" stroke-width="0.8" textLength="48.00" lengthAdjust="spacingAndGlyphs" xml:space="preserve">/\\</text>
<text x="262.00" y="1174" font-size="28.5" font-family="'Liberation Mono', monospace" fill="#080808" stroke="#080808" stroke-width="0.8" textLength="16.00" lengthAdjust="spacingAndGlyphs" xml:space="preserve">/</text>
<text x="342.00" y="1174" font-size="28.5" font-family="'Liberation Mono', monospace" fill="#080808" stroke="#080808" stroke-width="0.8" textLength="16.00" lengthAdjust="spacingAndGlyphs" xml:space="preserve">&#x27;</text>
<text x="486.00" y="1174" font-size="28.5" font-family="'Liberation Mono', monospace" fill="#080808" stroke="#080808" stroke-width="0.8" textLength="16.00" lengthAdjust="spacingAndGlyphs" xml:space="preserve">(</text>
<text x="518.00" y="1174" font-size="28.5" font-family="'Liberation Mono', monospace" fill="#080808" stroke="#080808" stroke-width="0.8" textLength="16.00" lengthAdjust="spacingAndGlyphs" xml:space="preserve">)</text>
<text x="710.00" y="1174" font-size="28.5" font-family="'Liberation Mono', monospace" fill="#080808" stroke="#080808" stroke-width="0.8" textLength="16.00" lengthAdjust="spacingAndGlyphs" xml:space="preserve">\</text>
<text x="742.00" y="1174" font-size="28.5" font-family="'Liberation Mono', monospace" fill="#080808" stroke="#080808" stroke-width="0.8" textLength="16.00" lengthAdjust="spacingAndGlyphs" xml:space="preserve">\</text>
<text x="774.00" y="1174" font-size="28.5" font-family="'Liberation Mono', monospace" fill="#080808" stroke="#080808" stroke-width="0.8" textLength="16.00" lengthAdjust="spacingAndGlyphs" xml:space="preserve">\</text>
<text x="806.00" y="1174" font-size="28.5" font-family="'Liberation Mono', monospace" fill="#080808" stroke="#080808" stroke-width="0.8" textLength="16.00" lengthAdjust="spacingAndGlyphs" xml:space="preserve">\</text>
<rect x="279.7" y="1218.3" width="12.6" height="3.8" fill="#080808" />
<rect x="295.7" y="1218.3" width="12.6" height="3.8" fill="#080808" />
<rect x="311.7" y="1218.3" width="12.6" height="3.8" fill="#080808" />
<rect x="391.7" y="1218.3" width="12.6" height="3.8" fill="#080808" />
<rect x="471.7" y="1218.3" width="12.6" height="3.8" fill="#080808" />
<rect x="567.7" y="1218.3" width="12.6" height="3.8" fill="#080808" />
<rect x="647.7" y="1218.3" width="12.6" height="3.8" fill="#080808" />
<text x="182.00" y="1218" font-size="28.5" font-family="'Liberation Mono', monospace" fill="#080808" stroke="#080808" stroke-width="0.8" textLength="16.00" lengthAdjust="spacingAndGlyphs" xml:space="preserve">(</text>
<text x="214.00" y="1218" font-size="28.5" font-family="'Liberation Mono', monospace" fill="#080808" stroke="#080808" stroke-width="0.8" textLength="16.00" lengthAdjust="spacingAndGlyphs" xml:space="preserve">(</text>
<text x="246.00" y="1218" font-size="28.5" font-family="'Liberation Mono', monospace" fill="#080808" stroke="#080808" stroke-width="0.8" textLength="32.00" lengthAdjust="spacingAndGlyphs" xml:space="preserve">)\</text>
<text x="342.00" y="1218" font-size="28.5" font-family="'Liberation Mono', monospace" fill="#080808" stroke="#080808" stroke-width="0.8" textLength="16.00" lengthAdjust="spacingAndGlyphs" xml:space="preserve">|</text>
<text x="374.00" y="1218" font-size="28.5" font-family="'Liberation Mono', monospace" fill="#080808" stroke="#080808" stroke-width="0.8" textLength="16.00" lengthAdjust="spacingAndGlyphs" xml:space="preserve">&#x27;</text>
<text x="422.00" y="1218" font-size="28.5" font-family="'Liberation Mono', monospace" fill="#080808" stroke="#080808" stroke-width="0.8" textLength="16.00" lengthAdjust="spacingAndGlyphs" xml:space="preserve">|</text>
<text x="454.00" y="1218" font-size="28.5" font-family="'Liberation Mono', monospace" fill="#080808" stroke="#080808" stroke-width="0.8" textLength="16.00" lengthAdjust="spacingAndGlyphs" xml:space="preserve">&#x27;</text>
<text x="486.00" y="1218" font-size="28.5" font-family="'Liberation Mono', monospace" fill="#080808" stroke="#080808" stroke-width="0.8" textLength="16.00" lengthAdjust="spacingAndGlyphs" xml:space="preserve">|</text>
<text x="518.00" y="1218" font-size="28.5" font-family="'Liberation Mono', monospace" fill="#080808" stroke="#080808" stroke-width="0.8" textLength="16.00" lengthAdjust="spacingAndGlyphs" xml:space="preserve">|</text>
<text x="550.00" y="1218" font-size="28.5" font-family="'Liberation Mono', monospace" fill="#080808" stroke="#080808" stroke-width="0.8" textLength="16.00" lengthAdjust="spacingAndGlyphs" xml:space="preserve">&#x27;</text>
<text x="598.00" y="1218" font-size="28.5" font-family="'Liberation Mono', monospace" fill="#080808" stroke="#080808" stroke-width="0.8" textLength="32.00" lengthAdjust="spacingAndGlyphs" xml:space="preserve">\/</text>
<text x="662.00" y="1218" font-size="28.5" font-family="'Liberation Mono', monospace" fill="#080808" stroke="#080808" stroke-width="0.8" textLength="16.00" lengthAdjust="spacingAndGlyphs" xml:space="preserve">`</text>
<text x="694.00" y="1218" font-size="28.5" font-family="'Liberation Mono', monospace" fill="#080808" stroke="#080808" stroke-width="0.8" textLength="16.00" lengthAdjust="spacingAndGlyphs" xml:space="preserve">|</text>
<text x="726.00" y="1218" font-size="28.5" font-family="'Liberation Mono', monospace" fill="#080808" stroke="#080808" stroke-width="0.8" textLength="16.00" lengthAdjust="spacingAndGlyphs" xml:space="preserve">\</text>
<text x="758.00" y="1218" font-size="28.5" font-family="'Liberation Mono', monospace" fill="#080808" stroke="#080808" stroke-width="0.8" textLength="16.00" lengthAdjust="spacingAndGlyphs" xml:space="preserve">\</text>
<text x="790.00" y="1218" font-size="28.5" font-family="'Liberation Mono', monospace" fill="#080808" stroke="#080808" stroke-width="0.8" textLength="16.00" lengthAdjust="spacingAndGlyphs" xml:space="preserve">\</text>
<text x="822.00" y="1218" font-size="28.5" font-family="'Liberation Mono', monospace" fill="#080808" stroke="#080808" stroke-width="0.8" textLength="16.00" lengthAdjust="spacingAndGlyphs" xml:space="preserve">\</text>
<rect x="279.7" y="1262.3" width="12.6" height="3.8" fill="#080808" />
<rect x="295.7" y="1262.3" width="12.6" height="3.8" fill="#080808" />
<rect x="311.7" y="1262.3" width="12.6" height="3.8" fill="#080808" />
<rect x="391.7" y="1262.3" width="12.6" height="3.8" fill="#080808" />
<rect x="647.7" y="1262.3" width="12.6" height="3.8" fill="#080808" />
<text x="198.00" y="1262" font-size="28.5" font-family="'Liberation Mono', monospace" fill="#080808" stroke="#080808" stroke-width="0.8" textLength="48.00" lengthAdjust="spacingAndGlyphs" xml:space="preserve">\\/</text>
<text x="326.00" y="1262" font-size="28.5" font-family="'Liberation Mono', monospace" fill="#080808" stroke="#080808" stroke-width="0.8" textLength="32.00" lengthAdjust="spacingAndGlyphs" xml:space="preserve">)|</text>
<text x="374.00" y="1262" font-size="28.5" font-family="'Liberation Mono', monospace" fill="#080808" stroke="#080808" stroke-width="0.8" textLength="16.00" lengthAdjust="spacingAndGlyphs" xml:space="preserve">|</text>
<text x="406.00" y="1262" font-size="28.5" font-family="'Liberation Mono', monospace" fill="#080808" stroke="#080808" stroke-width="0.8" textLength="32.00" lengthAdjust="spacingAndGlyphs" xml:space="preserve">)|</text>
<text x="454.00" y="1262" font-size="28.5" font-family="'Liberation Mono', monospace" fill="#080808" stroke="#080808" stroke-width="0.8" textLength="16.00" lengthAdjust="spacingAndGlyphs" xml:space="preserve">|</text>
<text x="486.00" y="1262" font-size="28.5" font-family="'Liberation Mono', monospace" fill="#080808" stroke="#080808" stroke-width="0.8" textLength="16.00" lengthAdjust="spacingAndGlyphs" xml:space="preserve">|</text>
<text x="518.00" y="1262" font-size="28.5" font-family="'Liberation Mono', monospace" fill="#080808" stroke="#080808" stroke-width="0.8" textLength="16.00" lengthAdjust="spacingAndGlyphs" xml:space="preserve">|</text>
<text x="550.00" y="1262" font-size="28.5" font-family="'Liberation Mono', monospace" fill="#080808" stroke="#080808" stroke-width="0.8" textLength="16.00" lengthAdjust="spacingAndGlyphs" xml:space="preserve">|</text>
<text x="582.00" y="1262" font-size="28.5" font-family="'Liberation Mono', monospace" fill="#080808" stroke="#080808" stroke-width="0.8" textLength="32.00" lengthAdjust="spacingAndGlyphs" xml:space="preserve">||</text>
<text x="630.00" y="1262" font-size="28.5" font-family="'Liberation Mono', monospace" fill="#080808" stroke="#080808" stroke-width="0.8" textLength="16.00" lengthAdjust="spacingAndGlyphs" xml:space="preserve">(</text>
<text x="662.00" y="1262" font-size="28.5" font-family="'Liberation Mono', monospace" fill="#080808" stroke="#080808" stroke-width="0.8" textLength="16.00" lengthAdjust="spacingAndGlyphs" xml:space="preserve">|</text>
<text x="694.00" y="1262" font-size="28.5" font-family="'Liberation Mono', monospace" fill="#080808" stroke="#080808" stroke-width="0.8" textLength="16.00" lengthAdjust="spacingAndGlyphs" xml:space="preserve">|</text>
<text x="742.00" y="1262" font-size="28.5" font-family="'Liberation Mono', monospace" fill="#080808" stroke="#080808" stroke-width="0.8" textLength="16.00" lengthAdjust="spacingAndGlyphs" xml:space="preserve">)</text>
<text x="774.00" y="1262" font-size="28.5" font-family="'Liberation Mono', monospace" fill="#080808" stroke="#080808" stroke-width="0.8" textLength="16.00" lengthAdjust="spacingAndGlyphs" xml:space="preserve">)</text>
<text x="806.00" y="1262" font-size="28.5" font-family="'Liberation Mono', monospace" fill="#080808" stroke="#080808" stroke-width="0.8" textLength="16.00" lengthAdjust="spacingAndGlyphs" xml:space="preserve">)</text>
<text x="838.00" y="1262" font-size="28.5" font-family="'Liberation Mono', monospace" fill="#080808" stroke="#080808" stroke-width="0.8" textLength="16.00" lengthAdjust="spacingAndGlyphs" xml:space="preserve">)</text>
<rect x="279.7" y="1306.3" width="12.6" height="3.8" fill="#080808" />
<rect x="295.7" y="1306.3" width="12.6" height="3.8" fill="#080808" />
<rect x="311.7" y="1306.3" width="12.6" height="3.8" fill="#080808" />
<rect x="327.7" y="1306.3" width="12.6" height="3.8" fill="#080808" />
<rect x="391.7" y="1306.3" width="12.6" height="3.8" fill="#080808" />
<rect x="407.7" y="1306.3" width="12.6" height="3.8" fill="#080808" />
<rect x="439.7" y="1306.3" width="12.6" height="3.8" fill="#080808" />
<rect x="503.7" y="1306.3" width="12.6" height="3.8" fill="#080808" />
<rect x="535.7" y="1306.3" width="12.6" height="3.8" fill="#080808" />
<rect x="599.7" y="1306.3" width="12.6" height="3.8" fill="#080808" />
<rect x="631.7" y="1306.3" width="12.6" height="3.8" fill="#080808" />
<rect x="647.7" y="1306.3" width="12.6" height="3.8" fill="#080808" />
<text x="214.00" y="1306" font-size="28.5" font-family="'Liberation Mono', monospace" fill="#080808" stroke="#080808" stroke-width="0.8" textLength="16.00" lengthAdjust="spacingAndGlyphs" xml:space="preserve">&#x27;</text>
<text x="262.00" y="1306" font-size="28.5" font-family="'Liberation Mono', monospace" fill="#080808" stroke="#080808" stroke-width="0.8" textLength="16.00" lengthAdjust="spacingAndGlyphs" xml:space="preserve">|</text>
<text x="342.00" y="1306" font-size="28.5" font-family="'Liberation Mono', monospace" fill="#080808" stroke="#080808" stroke-width="0.8" textLength="16.00" lengthAdjust="spacingAndGlyphs" xml:space="preserve">|</text>
<text x="374.00" y="1306" font-size="28.5" font-family="'Liberation Mono', monospace" fill="#080808" stroke="#080808" stroke-width="0.8" textLength="16.00" lengthAdjust="spacingAndGlyphs" xml:space="preserve">.</text>
<text x="422.00" y="1306" font-size="28.5" font-family="'Liberation Mono', monospace" fill="#080808" stroke="#080808" stroke-width="0.8" textLength="16.00" lengthAdjust="spacingAndGlyphs" xml:space="preserve">|</text>
<text x="454.00" y="1306" font-size="28.5" font-family="'Liberation Mono', monospace" fill="#080808" stroke="#080808" stroke-width="0.8" textLength="16.00" lengthAdjust="spacingAndGlyphs" xml:space="preserve">|</text>
<text x="486.00" y="1306" font-size="28.5" font-family="'Liberation Mono', monospace" fill="#080808" stroke="#080808" stroke-width="0.8" textLength="16.00" lengthAdjust="spacingAndGlyphs" xml:space="preserve">|</text>
<text x="518.00" y="1306" font-size="28.5" font-family="'Liberation Mono', monospace" fill="#080808" stroke="#080808" stroke-width="0.8" textLength="16.00" lengthAdjust="spacingAndGlyphs" xml:space="preserve">|</text>
<text x="550.00" y="1306" font-size="28.5" font-family="'Liberation Mono', monospace" fill="#080808" stroke="#080808" stroke-width="0.8" textLength="16.00" lengthAdjust="spacingAndGlyphs" xml:space="preserve">|</text>
<text x="582.00" y="1306" font-size="28.5" font-family="'Liberation Mono', monospace" fill="#080808" stroke="#080808" stroke-width="0.8" textLength="16.00" lengthAdjust="spacingAndGlyphs" xml:space="preserve">|</text>
<text x="614.00" y="1306" font-size="28.5" font-family="'Liberation Mono', monospace" fill="#080808" stroke="#080808" stroke-width="0.8" textLength="16.00" lengthAdjust="spacingAndGlyphs" xml:space="preserve">\</text>
<text x="662.00" y="1306" font-size="28.5" font-family="'Liberation Mono', monospace" fill="#080808" stroke="#080808" stroke-width="0.8" textLength="16.00" lengthAdjust="spacingAndGlyphs" xml:space="preserve">,</text>
<text x="694.00" y="1306" font-size="28.5" font-family="'Liberation Mono', monospace" fill="#080808" stroke="#080808" stroke-width="0.8" textLength="16.00" lengthAdjust="spacingAndGlyphs" xml:space="preserve">|</text>
<text x="726.00" y="1306" font-size="28.5" font-family="'Liberation Mono', monospace" fill="#080808" stroke="#080808" stroke-width="0.8" textLength="16.00" lengthAdjust="spacingAndGlyphs" xml:space="preserve">/</text>
<text x="758.00" y="1306" font-size="28.5" font-family="'Liberation Mono', monospace" fill="#080808" stroke="#080808" stroke-width="0.8" textLength="16.00" lengthAdjust="spacingAndGlyphs" xml:space="preserve">/</text>
<text x="790.00" y="1306" font-size="28.5" font-family="'Liberation Mono', monospace" fill="#080808" stroke="#080808" stroke-width="0.8" textLength="16.00" lengthAdjust="spacingAndGlyphs" xml:space="preserve">/</text>
<text x="822.00" y="1306" font-size="28.5" font-family="'Liberation Mono', monospace" fill="#080808" stroke="#080808" stroke-width="0.8" textLength="16.00" lengthAdjust="spacingAndGlyphs" xml:space="preserve">/</text>
<rect x="359.7" y="1350.3" width="12.6" height="3.8" fill="#080808" />
<rect x="631.7" y="1350.3" width="12.6" height="3.8" fill="#080808" />
<rect x="647.7" y="1350.3" width="12.6" height="3.8" fill="#080808" />
<rect x="663.7" y="1350.3" width="12.6" height="3.8" fill="#080808" />
<rect x="727.7" y="1350.3" width="12.6" height="3.8" fill="#080808" />
<rect x="759.7" y="1350.3" width="12.6" height="3.8" fill="#080808" />
<rect x="791.7" y="1350.3" width="12.6" height="3.8" fill="#080808" />
<text x="198.00" y="1350" font-size="28.5" font-family="'Liberation Mono', monospace" fill="#080808" stroke="#080808" stroke-width="0.8" textLength="160.00" lengthAdjust="spacingAndGlyphs" xml:space="preserve">=========|</text>
<text x="374.00" y="1350" font-size="28.5" font-family="'Liberation Mono', monospace" fill="#080808" stroke="#080808" stroke-width="0.8" textLength="256.00" lengthAdjust="spacingAndGlyphs" xml:space="preserve">|==============|</text>
<text x="678.00" y="1350" font-size="28.5" font-family="'Liberation Mono', monospace" fill="#080808" stroke="#080808" stroke-width="0.8" textLength="48.00" lengthAdjust="spacingAndGlyphs" xml:space="preserve">/=/</text>
<text x="742.00" y="1350" font-size="28.5" font-family="'Liberation Mono', monospace" fill="#080808" stroke="#080808" stroke-width="0.8" textLength="16.00" lengthAdjust="spacingAndGlyphs" xml:space="preserve">/</text>
<text x="774.00" y="1350" font-size="28.5" font-family="'Liberation Mono', monospace" fill="#080808" stroke="#080808" stroke-width="0.8" textLength="16.00" lengthAdjust="spacingAndGlyphs" xml:space="preserve">/</text>
<text x="806.00" y="1350" font-size="28.5" font-family="'Liberation Mono', monospace" fill="#080808" stroke="#080808" stroke-width="0.8" textLength="16.00" lengthAdjust="spacingAndGlyphs" xml:space="preserve">/</text>
<text x="198.00" y="1394" font-size="28.5" font-family="'Liberation Mono', monospace" fill="#248024" stroke="#248024" stroke-width="0.8" textLength="272.00" lengthAdjust="spacingAndGlyphs" xml:space="preserve">:: Spring Boot ::</text>
<text x="598.00" y="1394" font-size="28.5" font-family="'Liberation Mono', monospace" fill="#080808" stroke="#080808" stroke-width="0.8" textLength="256.00" lengthAdjust="spacingAndGlyphs" xml:space="preserve">(v2.3.9.RELEASE)</text>
<text x="182.00" y="1482" font-size="28.5" font-family="'Liberation Mono', monospace" fill="#080808" stroke="#080808" stroke-width="0.8" textLength="288.00" lengthAdjust="spacingAndGlyphs" xml:space="preserve">10-31 13:35:05:153</text>
<text x="502.00" y="1482" font-size="28.5" font-family="'Liberation Mono', monospace" fill="#1c7d1c" stroke="#1c7d1c" stroke-width="0.8" textLength="64.00" lengthAdjust="spacingAndGlyphs" xml:space="preserve">INFO</text>
<text x="582.00" y="1482" font-size="28.5" font-family="'Liberation Mono', monospace" fill="#b200b2" stroke="#b200b2" stroke-width="0.8" textLength="80.00" lengthAdjust="spacingAndGlyphs" xml:space="preserve">15500</text>
<text x="678.00" y="1482" font-size="28.5" font-family="'Liberation Mono', monospace" fill="#080808" stroke="#080808" stroke-width="0.8" textLength="48.00" lengthAdjust="spacingAndGlyphs" xml:space="preserve">---</text>
<text x="742.00" y="1482" font-size="28.5" font-family="'Liberation Mono', monospace" fill="#080808" stroke="#080808" stroke-width="0.8" textLength="16.00" lengthAdjust="spacingAndGlyphs" xml:space="preserve">[</text>
<text x="934.00" y="1482" font-size="28.5" font-family="'Liberation Mono', monospace" fill="#080808" stroke="#080808" stroke-width="0.8" textLength="80.00" lengthAdjust="spacingAndGlyphs" xml:space="preserve">main]</text>
<text x="1030.00" y="1482" font-size="28.5" font-family="'Liberation Mono', monospace" fill="#00878a" stroke="#00878a" stroke-width="0.8" textLength="512.00" lengthAdjust="spacingAndGlyphs" xml:space="preserve">cn.itcast.mq.ConsumerApplication</text>
<text x="1686.00" y="1482" font-size="28.5" font-family="'Liberation Mono', monospace" fill="#080808" stroke="#080808" stroke-width="0.8" textLength="16.00" lengthAdjust="spacingAndGlyphs" xml:space="preserve">:</text>
<text x="1718.00" y="1482" font-size="28.5" font-family="'Liberation Mono', monospace" fill="#080808" stroke="#080808" stroke-width="0.8" textLength="944.00" lengthAdjust="spacingAndGlyphs" xml:space="preserve">Starting ConsumerApplication on DingJiaxiong with PID 15500</text>
<text x="198.00" y="1526" font-size="28.5" font-family="'Liberation Mono', monospace" fill="#080808" stroke="#080808" stroke-width="0.8" textLength="16.00" lengthAdjust="spacingAndGlyphs" xml:space="preserve">(</text>
<text x="214.00" y="1526" font-size="28.5" font-family="'Liberation Mono', monospace" fill="#1f66d1" stroke="#1f66d1" stroke-width="0.8" textLength="960.00" lengthAdjust="spacingAndGlyphs" xml:space="preserve">D:\DingJiaxiong\IdeaProjects\mq-demo\consumer\target\classes</text>
<rect x="214.0" y="1530" width="960.0" height="2" fill="#1f66d1" />
<text x="1190.00" y="1526" font-size="28.5" font-family="'Liberation Mono', monospace" fill="#080808" stroke="#080808" stroke-width="0.8" textLength="1024.00" lengthAdjust="spacingAndGlyphs" xml:space="preserve">started by DingJiaxiong in D:\DingJiaxiong\IdeaProjects\mq-demo)</text>
<text x="182.00" y="1570" font-size="28.5" font-family="'Liberation Mono', monospace" fill="#080808" stroke="#080808" stroke-width="0.8" textLength="288.00" lengthAdjust="spacingAndGlyphs" xml:space="preserve">10-31 13:35:05:154</text>
<text x="502.00" y="1570" font-size="28.5" font-family="'Liberation Mono', monospace" fill="#1c7d1c" stroke="#1c7d1c" stroke-width="0.8" textLength="64.00" lengthAdjust="spacingAndGlyphs" xml:space="preserve">INFO</text>
<text x="582.00" y="1570" font-size="28.5" font-family="'Liberation Mono', monospace" fill="#b200b2" stroke="#b200b2" stroke-width="0.8" textLength="80.00" lengthAdjust="spacingAndGlyphs" xml:space="preserve">15500</text>
<text x="678.00" y="1570" font-size="28.5" font-family="'Liberation Mono', monospace" fill="#080808" stroke="#080808" stroke-width="0.8" textLength="48.00" lengthAdjust="spacingAndGlyphs" xml:space="preserve">---</text>
<text x="742.00" y="1570" font-size="28.5" font-family="'Liberation Mono', monospace" fill="#080808" stroke="#080808" stroke-width="0.8" textLength="16.00" lengthAdjust="spacingAndGlyphs" xml:space="preserve">[</text>
<text x="934.00" y="1570" font-size="28.5" font-family="'Liberation Mono', monospace" fill="#080808" stroke="#080808" stroke-width="0.8" textLength="80.00" lengthAdjust="spacingAndGlyphs" xml:space="preserve">main]</text>
<text x="1030.00" y="1570" font-size="28.5" font-family="'Liberation Mono', monospace" fill="#00878a" stroke="#00878a" stroke-width="0.8" textLength="512.00" lengthAdjust="spacingAndGlyphs" xml:space="preserve">cn.itcast.mq.ConsumerApplication</text>
<text x="1686.00" y="1570" font-size="28.5" font-family="'Liberation Mono', monospace" fill="#080808" stroke="#080808" stroke-width="0.8" textLength="16.00" lengthAdjust="spacingAndGlyphs" xml:space="preserve">:</text>
<text x="1718.00" y="1570" font-size="28.5" font-family="'Liberation Mono', monospace" fill="#080808" stroke="#080808" stroke-width="0.8" textLength="1024.00" lengthAdjust="spacingAndGlyphs" xml:space="preserve">No active profile set, falling back to default profiles: default</text>
<text x="182.00" y="1614" font-size="28.5" font-family="'Liberation Mono', monospace" fill="#080808" stroke="#080808" stroke-width="0.8" textLength="288.00" lengthAdjust="spacingAndGlyphs" xml:space="preserve">10-31 13:35:05:559</text>
<text x="502.00" y="1614" font-size="28.5" font-family="'Liberation Mono', monospace" fill="#1c7d1c" stroke="#1c7d1c" stroke-width="0.8" textLength="64.00" lengthAdjust="spacingAndGlyphs" xml:space="preserve">INFO</text>
<text x="582.00" y="1614" font-size="28.5" font-family="'Liberation Mono', monospace" fill="#b200b2" stroke="#b200b2" stroke-width="0.8" textLength="80.00" lengthAdjust="spacingAndGlyphs" xml:space="preserve">15500</text>
<text x="678.00" y="1614" font-size="28.5" font-family="'Liberation Mono', monospace" fill="#080808" stroke="#080808" stroke-width="0.8" textLength="48.00" lengthAdjust="spacingAndGlyphs" xml:space="preserve">---</text>
<text x="742.00" y="1614" font-size="28.5" font-family="'Liberation Mono', monospace" fill="#080808" stroke="#080808" stroke-width="0.8" textLength="16.00" lengthAdjust="spacingAndGlyphs" xml:space="preserve">[</text>
<text x="934.00" y="1614" font-size="28.5" font-family="'Liberation Mono', monospace" fill="#080808" stroke="#080808" stroke-width="0.8" textLength="80.00" lengthAdjust="spacingAndGlyphs" xml:space="preserve">main]</text>
<text x="1030.00" y="1614" font-size="28.5" font-family="'Liberation Mono', monospace" fill="#00878a" stroke="#00878a" stroke-width="0.8" textLength="544.00" lengthAdjust="spacingAndGlyphs" xml:space="preserve">o.s.a.r.c.CachingConnectionFactory</text>
<text x="1686.00" y="1614" font-size="28.5" font-family="'Liberation Mono', monospace" fill="#080808" stroke="#080808" stroke-width="0.8" textLength="16.00" lengthAdjust="spacingAndGlyphs" xml:space="preserve">:</text>
<text x="1718.00" y="1614" font-size="28.5" font-family="'Liberation Mono', monospace" fill="#080808" stroke="#080808" stroke-width="0.8" textLength="768.00" lengthAdjust="spacingAndGlyphs" xml:space="preserve">Attempting to connect to: [118.195.240.188:5672]</text>
<text x="182.00" y="1658" font-size="28.5" font-family="'Liberation Mono', monospace" fill="#080808" stroke="#080808" stroke-width="0.8" textLength="288.00" lengthAdjust="spacingAndGlyphs" xml:space="preserve">10-31 13:35:05:848</text>
<text x="502.00" y="1658" font-size="28.5" font-family="'Liberation Mono', monospace" fill="#1c7d1c" stroke="#1c7d1c" stroke-width="0.8" textLength="64.00" lengthAdjust="spacingAndGlyphs" xml:space="preserve">INFO</text>
<text x="582.00" y="1658" font-size="28.5" font-family="'Liberation Mono', monospace" fill="#b200b2" stroke="#b200b2" stroke-width="0.8" textLength="80.00" lengthAdjust="spacingAndGlyphs" xml:space="preserve">15500</text>
<text x="678.00" y="1658" font-size="28.5" font-family="'Liberation Mono', monospace" fill="#080808" stroke="#080808" stroke-width="0.8" textLength="48.00" lengthAdjust="spacingAndGlyphs" xml:space="preserve">---</text>
<text x="742.00" y="1658" font-size="28.5" font-family="'Liberation Mono', monospace" fill="#080808" stroke="#080808" stroke-width="0.8" textLength="16.00" lengthAdjust="spacingAndGlyphs" xml:space="preserve">[</text>
<text x="934.00" y="1658" font-size="28.5" font-family="'Liberation Mono', monospace" fill="#080808" stroke="#080808" stroke-width="0.8" textLength="80.00" lengthAdjust="spacingAndGlyphs" xml:space="preserve">main]</text>
<text x="1030.00" y="1658" font-size="28.5" font-family="'Liberation Mono', monospace" fill="#00878a" stroke="#00878a" stroke-width="0.8" textLength="544.00" lengthAdjust="spacingAndGlyphs" xml:space="preserve">o.s.a.r.c.CachingConnectionFactory</text>
<text x="1686.00" y="1658" font-size="28.5" font-family="'Liberation Mono', monospace" fill="#080808" stroke="#080808" stroke-width="0.8" textLength="16.00" lengthAdjust="spacingAndGlyphs" xml:space="preserve">:</text>
<text x="1718.00" y="1658" font-size="28.5" font-family="'Liberation Mono', monospace" fill="#080808" stroke="#080808" stroke-width="0.8" textLength="1344.00" lengthAdjust="spacingAndGlyphs" xml:space="preserve">Created new connection: rabbitConnectionFactory#4e2916c3:0/SimpleConnection@10ef5fa0</text>
<text x="198.00" y="1702" font-size="28.5" font-family="'Liberation Mono', monospace" fill="#080808" stroke="#080808" stroke-width="0.8" textLength="1024.00" lengthAdjust="spacingAndGlyphs" xml:space="preserve">[delegate=amqp://itcast@118.195.240.188:5672/, localPort= 13724]</text>
<text x="182.00" y="1746" font-size="28.5" font-family="'Liberation Mono', monospace" fill="#080808" stroke="#080808" stroke-width="0.8" textLength="288.00" lengthAdjust="spacingAndGlyphs" xml:space="preserve">10-31 13:35:06:759</text>
<text x="502.00" y="1746" font-size="28.5" font-family="'Liberation Mono', monospace" fill="#1c7d1c" stroke="#1c7d1c" stroke-width="0.8" textLength="64.00" lengthAdjust="spacingAndGlyphs" xml:space="preserve">INFO</text>
<text x="582.00" y="1746" font-size="28.5" font-family="'Liberation Mono', monospace" fill="#b200b2" stroke="#b200b2" stroke-width="0.8" textLength="80.00" lengthAdjust="spacingAndGlyphs" xml:space="preserve">15500</text>
<text x="678.00" y="1746" font-size="28.5" font-family="'Liberation Mono', monospace" fill="#080808" stroke="#080808" stroke-width="0.8" textLength="48.00" lengthAdjust="spacingAndGlyphs" xml:space="preserve">---</text>
<text x="742.00" y="1746" font-size="28.5" font-family="'Liberation Mono', monospace" fill="#080808" stroke="#080808" stroke-width="0.8" textLength="16.00" lengthAdjust="spacingAndGlyphs" xml:space="preserve">[</text>
<text x="934.00" y="1746" font-size="28.5" font-family="'Liberation Mono', monospace" fill="#080808" stroke="#080808" stroke-width="0.8" textLength="80.00" lengthAdjust="spacingAndGlyphs" xml:space="preserve">main]</text>
<text x="1030.00" y="1746" font-size="28.5" font-family="'Liberation Mono', monospace" fill="#00878a" stroke="#00878a" stroke-width="0.8" textLength="512.00" lengthAdjust="spacingAndGlyphs" xml:space="preserve">cn.itcast.mq.ConsumerApplication</text>
<text x="1686.00" y="1746" font-size="28.5" font-family="'Liberation Mono', monospace" fill="#080808" stroke="#080808" stroke-width="0.8" textLength="16.00" lengthAdjust="spacingAndGlyphs" xml:space="preserve">:</text>
<text x="1718.00" y="1746" font-size="28.5" font-family="'Liberation Mono', monospace" fill="#080808" stroke="#080808" stroke-width="0.8" textLength="1088.00" lengthAdjust="spacingAndGlyphs" xml:space="preserve">Started ConsumerApplication in 1.766 seconds (JVM running for 2.044)</text>
<rect x="182" y="1763" width="3" height="35" fill="#000" />
<rect x="292.4" y="1823" width="111" height="41" fill="#c3c3c3" />
<text x="102.7" y="1853.6" font-size="24" fill="#000" font-family="'Liberation Sans', sans-serif" textLength="162.7" lengthAdjust="spacingAndGlyphs" >Version Control</text>
<text x="345" y="1853.6" font-size="24" fill="#000" font-family="'Liberation Sans', sans-serif" textLength="39.4" lengthAdjust="spacingAndGlyphs" >Run</text>
<text x="458.5" y="1853.6" font-size="24" fill="#000" font-family="'Liberation Sans', sans-serif" textLength="64.0" lengthAdjust="spacingAndGlyphs" >TODO</text>
<text x="600.8" y="1853.6" font-size="24" fill="#000" font-family="'Liberation Sans', sans-serif" textLength="96.9" lengthAdjust="spacingAndGlyphs" >Problems</text>
<text x="772.7" y="1853.6" font-size="24" fill="#000" font-family="'Liberation Sans', sans-serif" textLength="67.3" lengthAdjust="spacingAndGlyphs" >Spring</text>
<text x="918.6" y="1853.6" font-size="24" fill="#000" font-family="'Liberation Sans', sans-serif" textLength="89.8" lengthAdjust="spacingAndGlyphs" >Terminal</text>
<text x="1086.5" y="1853.6" font-size="24" fill="#000" font-family="'Liberation Sans', sans-serif" textLength="82.5" lengthAdjust="spacingAndGlyphs" >Services</text>
<text x="1245" y="1853.6" font-size="24" fill="#000" font-family="'Liberation Sans', sans-serif" textLength="74.3" lengthAdjust="spacingAndGlyphs" >Profiler</text>
<text x="1393.5" y="1853.6" font-size="24" fill="#000" font-family="'Liberation Sans', sans-serif" textLength="51.1" lengthAdjust="spacingAndGlyphs" >Build</text>
<text x="1524.8" y="1853.6" font-size="24" fill="#000" font-family="'Liberation Sans', sans-serif" textLength="146.2" lengthAdjust="spacingAndGlyphs" >Dependencies</text>
<path d="M75.5,1835 V1855 M85.8,1839.5 C85.8,1847 76,1846 75.5,1852" fill="none" stroke="#6e6e6e" stroke-width="2.6"/>
<circle cx="75.5" cy="1835" r="3" fill="#6e6e6e"/>
<circle cx="85.8" cy="1839" r="3" fill="#6e6e6e"/>
<circle cx="75.5" cy="1855" r="3" fill="#6e6e6e"/>
<polygon points="313.7,1835.5 329.4,1845 313.7,1854.6" fill="#6e6e6e"/>
<circle cx="332" cy="1854" r="5.5" fill="#c3c3c3"/><circle cx="332" cy="1854" r="4.2" fill="#19d219"/>
<rect x="428.2" y="1836.0" width="4.2" height="3.4" fill="#6e6e6e" />
<rect x="435.5" y="1836.0" width="12.5" height="3.4" fill="#6e6e6e" />
<rect x="428.2" y="1842.8" width="4.2" height="3.4" fill="#6e6e6e" />
<rect x="435.5" y="1842.8" width="12.5" height="3.4" fill="#6e6e6e" />
<rect x="428.2" y="1849.5" width="4.2" height="3.4" fill="#6e6e6e" />
<rect x="435.5" y="1849.5" width="12.5" height="3.4" fill="#6e6e6e" />
<circle cx="579" cy="1843.8" r="10" fill="#6e6e6e"/><rect x="577.3" y="1836.5" width="3.4" height="9" fill="#f2f2f2"/><rect x="577.3" y="1847.8" width="3.4" height="3.4" fill="#f2f2f2"/>
<path d="M741,1852 C736,1843 743,1837 752,1837 C757,1837 761,1836 763.5,1833 C765.5,1843 761,1851 752,1852.5 C748,1853 744,1852 741,1853.5 Z" fill="#6e6e6e"/>
<path d="M742,1852 C748,1846 753,1844 759,1841" stroke="#f2f2f2" stroke-width="1.4" fill="none"/>
<rect x="886" y="1834.3" width="21.8" height="19.6" fill="#6e6e6e" />
<path d="M889.5,1838.5 L894,1842.5 L889.5,1846.5" fill="none" stroke="#f2f2f2" stroke-width="1.6"/><rect x="895.5" y="1848" width="7" height="1.8" fill="#f2f2f2"/>
<polygon points="1077.50,1844.80 1071.25,1855.63 1058.75,1855.63 1052.50,1844.80 1058.75,1833.97 1071.25,1833.97" fill="#6e6e6e"/>
<polygon points="1061,1838.5 1071.5,1844.8 1061,1851" fill="#f2f2f2"/>
<path d="M1227.5,1849 A9,9 0 1 1 1229,1836.5" fill="none" stroke="#6e6e6e" stroke-width="2.4"/><path d="M1220,1837 V1842 L1217,1845" fill="none" stroke="#6e6e6e" stroke-width="2"/>
<polygon points="1224,1840 1235.7,1848.5 1224,1857" fill="#6e6e6e"/>
<path d="M1360,1840 L1366.5,1833.5 L1372,1836 L1369,1839 L1384,1854 L1381,1857 L1366,1842 L1363.5,1844 Z" fill="#6e6e6e"/>
<polygon points="1503,1833 1515,1839.5 1503,1846 1491,1839.5" fill="#6e6e6e"/>
<path d="M1491,1845 L1503,1851.5 L1515,1845 M1491,1850.5 L1503,1857 L1515,1850.5" fill="none" stroke="#6e6e6e" stroke-width="2.2"/>
<path d="M16,1878 h20 v19 M12.5,1881.5 h20 v15.5 h-20 z" fill="none" stroke="#6e6e6e" stroke-width="1.6"/>
<text x="54.5" y="1893.9" font-size="26" fill="#000" font-family="'Liberation Sans', sans-serif" textLength="435.5" lengthAdjust="spacingAndGlyphs" >All files are up-to-date (moments ago)</text>
<text x="2739" y="1893.7" font-size="26" fill="#000" font-family="'Liberation Sans', sans-serif" textLength="44.2" lengthAdjust="spacingAndGlyphs" >16:1</text>
<text x="2810.3" y="1893.7" font-size="26" fill="#000" font-family="'Liberation Sans', sans-serif" textLength="56.1" lengthAdjust="spacingAndGlyphs" >CRLF</text>
<text x="2893.5" y="1893.7" font-size="26" fill="#000" font-family="'Liberation Sans', sans-serif" textLength="66.1" lengthAdjust="spacingAndGlyphs" >UTF-8</text>
<text x="2985.7" y="1893.7" font-size="26" fill="#000" font-family="'Liberation Sans', sans-serif" textLength="97" lengthAdjust="spacingAndGlyphs" >4 spaces</text>
<path d="M0,1328 h16 l2,2 h2.5 l1.5,3 v109 l-1.5,2 h-2.5 l-2,2 h-16 z" fill="#b6b8bf"/>
<rect x="6" y="1342.2" width="8" height="1.8" fill="#9c9ea3" />
<rect x="6" y="1346.2" width="8" height="1.8" fill="#9c9ea3" />
<rect x="6" y="1350.2" width="8" height="1.8" fill="#9c9ea3" />
<rect x="6" y="1354.2" width="8" height="1.8" fill="#9c9ea3" />
<rect x="6" y="1358.2" width="8" height="1.8" fill="#9c9ea3" />
<rect x="6" y="1362.2" width="8" height="1.8" fill="#9c9ea3" />
<rect x="3.9" y="1366.2" width="8.2" height="1.8" fill="#f9d89a" />
<rect x="12.2" y="1366.2" width="1.8" height="1.8" fill="#9c9ea3" />
<rect x="3.9" y="1370.2" width="8.2" height="1.8" fill="#f7df98" />
<rect x="12.2" y="1370.2" width="1.8" height="1.8" fill="#9c9ea3" />
<rect x="3.9" y="1374.2" width="8.2" height="1.8" fill="#f5e49a" />
<rect x="12.2" y="1374.2" width="1.8" height="1.8" fill="#9c9ea3" />
<rect x="3.9" y="1378.2" width="8.2" height="1.8" fill="#f1e89c" />
<rect x="12.2" y="1378.2" width="1.8" height="1.8" fill="#9c9ea3" />
<rect x="3.9" y="1382.2" width="8.2" height="1.8" fill="#ede99e" />
<rect x="12.2" y="1382.2" width="1.8" height="1.8" fill="#9c9ea3" />
<rect x="3.9" y="1386.2" width="8.2" height="1.8" fill="#e6eba1" />
<rect x="12.2" y="1386.2" width="1.8" height="1.8" fill="#9c9ea3" />
<rect x="3.9" y="1390.2" width="8.2" height="1.8" fill="#dfeca6" />
<rect x="12.2" y="1390.2" width="1.8" height="1.8" fill="#9c9ea3" />
<rect x="3.9" y="1394.2" width="8.2" height="1.8" fill="#d6eeac" />
<rect x="12.2" y="1394.2" width="1.8" height="1.8" fill="#9c9ea3" />
<rect x="3.9" y="1398.2" width="8.2" height="1.8" fill="#cdeeb3" />
<rect x="12.2" y="1398.2" width="1.8" height="1.8" fill="#9c9ea3" />
<rect x="3.9" y="1402.2" width="8.2" height="1.8" fill="#c4efba" />
<rect x="12.2" y="1402.2" width="1.8" height="1.8" fill="#9c9ea3" />
<rect x="3.9" y="1406.2" width="8.2" height="1.8" fill="#bcf0c2" />
<rect x="12.2" y="1406.2" width="1.8" height="1.8" fill="#9c9ea3" />
<rect x="3.9" y="1410.2" width="8.2" height="1.8" fill="#b5f0c9" />
<rect x="12.2" y="1410.2" width="1.8" height="1.8" fill="#9c9ea3" />
<rect x="3.9" y="1414.2" width="8.2" height="1.8" fill="#aef0d0" />
<rect x="12.2" y="1414.2" width="1.8" height="1.8" fill="#9c9ea3" />
<rect x="3.9" y="1418.2" width="8.2" height="1.8" fill="#a9efd6" />
<rect x="12.2" y="1418.2" width="1.8" height="1.8" fill="#9c9ea3" />
<rect x="3.9" y="1422.2" width="8.2" height="1.8" fill="#a5efdb" />
<rect x="12.2" y="1422.2" width="1.8" height="1.8" fill="#9c9ea3" />
<rect x="3.9" y="1426.2" width="8.2" height="1.8" fill="#a2efe0" />
<rect x="12.2" y="1426.2" width="1.8" height="1.8" fill="#9c9ea3" />
<rect x="3.9" y="1430.2" width="8.2" height="1.8" fill="#a0efe4" />
<rect x="12.2" y="1430.2" width="1.8" height="1.8" fill="#9c9ea3" />
<text x="0" y="0" font-size="25" font-family="Liberation Sans, sans-serif" fill="#000" textLength="116.6" lengthAdjust="spacingAndGlyphs" transform="translate(32.5,1590.6) rotate(-90)">Bookmarks</text>
<path d="M14.2,1602 h17.6 v21.7 l-8.8,-7.8 l-8.8,7.8 z" fill="#6e6e6e"/>
<text x="0" y="0" font-size="25" font-family="Liberation Sans, sans-serif" fill="#000" textLength="97" lengthAdjust="spacingAndGlyphs" transform="translate(32.5,1763) rotate(-90)">Structure</text>
<rect x="14" y="1784.5" width="8.5" height="8.5" fill="#6e6e6e" />
<rect x="24.5" y="1784.5" width="8.5" height="8.5" fill="#6e6e6e" />
<rect x="24.5" y="1775" width="8.5" height="8" fill="#6e6e6e" />
<text x="3168" y="157" font-size="29" font-weight="bold" font-style="italic" font-family="Liberation Sans, sans-serif" fill="#6e6e6e" textLength="28" lengthAdjust="spacingAndGlyphs">m</text>
<text x="0" y="0" font-size="25" font-family="Liberation Sans, sans-serif" fill="#000" textLength="73.5" lengthAdjust="spacingAndGlyphs" transform="translate(3171.6,167.8) rotate(90)">Maven</text>
<ellipse cx="3183" cy="287.5" rx="11" ry="4.5" fill="#6e6e6e"/>
<path d="M3172,291.5 a11,4.5 0 0 0 22,0 v4 a11,4.5 0 0 1 -22,0 z" fill="#6e6e6e"/>
<path d="M3172,298.5 a11,4.5 0 0 0 22,0 v4 a11,4.5 0 0 1 -22,0 z" fill="#6e6e6e"/>
<text x="0" y="0" font-size="25" font-family="Liberation Sans, sans-serif" fill="#000" textLength="95" lengthAdjust="spacingAndGlyphs" transform="translate(3171.6,318) rotate(90)">Database</text>
<path d="M3172,477.8 L3174.5,472 L3175,466 C3175.5,461.5 3178.5,460 3182.5,460 C3186,460 3189,461.5 3189.5,466 L3190,472 L3194,477.8 Z" fill="#6e6e6e"/><path d="M3179.2,480 h7.6 a3.8,4 0 0 1 -7.6,0 z" fill="#6e6e6e"/>
<circle cx="3191" cy="463" r="6.5" fill="#f2f2f2"/><circle cx="3191" cy="463" r="5" fill="#369dd6"/>
<text x="0" y="0" font-size="25" font-family="Liberation Sans, sans-serif" fill="#000" textLength="131" lengthAdjust="spacingAndGlyphs" transform="translate(3171.6,494) rotate(90)">Notifications</text>
<path d="M2263,73 c4,0 6,3 6,7 c0,3 -1,6 -3,8 c3,1 6,2 6,6 v1 h-6 c-1,-3 -4,-4 -7,-5 c2,-3 3,-6 3,-9 c0,-3 -1,-6 -3,-8 z" fill="#6e6e6e"/>
<path d="M2244,97 c0,-5 4,-7 9,-8.5 c-2,-2 -3,-5 -3,-9 c0,-4 2.5,-7 6,-7 c3.5,0 6,3 6,7 c0,4 -1,7 -3,9 c5,1.5 9,3.5 9,8.5 z" fill="#6e6e6e" stroke="#f2f2f2" stroke-width="1"/>
<polygon points="2278.1,84.15 2293.9,84.15 2286,91.85" fill="#6e6e6e"/>
<rect x="2310" y="66" width="2" height="40" fill="#cccccc" />
<path d="M2330,79 L2338.5,71 L2345,74 L2341.5,77.5 L2358,94 L2353.5,98.5 L2337,82 L2334.5,84 Z" fill="#59a869"/>
<rect x="2383" y="65" width="353" height="42" rx="6" fill="#fff" stroke="#c4c4c4" stroke-width="2"/>
<g opacity="0.35">
<path d="M2403,96 C2399,86 2409,79 2419,79 C2425,79 2428,77 2430,74 C2432,84 2429,94 2419,96 C2413,97 2407,95 2403,98 Z" fill="#7ec17a"/>
<polygon points="2431.00,93.00 2426.50,100.79 2417.50,100.79 2413.00,93.00 2417.50,85.21 2426.50,85.21" fill="#fff" stroke="#fff" stroke-width="3.5"/>
<polygon points="2431.00,93.00 2426.50,100.79 2417.50,100.79 2413.00,93.00 2417.50,85.21 2426.50,85.21" fill="#9aa7b0"/>
<path d="M2425,90.5 A4.2,4.2 0 1 1 2419,90.5" fill="none" stroke="#fff" stroke-width="1.8"/>
<line x1="2422" y1="88.0" x2="2422" y2="94.0" stroke="#fff" stroke-width="1.8"/>
</g>
<circle cx="2428" cy="98" r="4.5" fill="#fff"/><circle cx="2428" cy="98" r="3.6" fill="#19c219"/>
<text x="2440.5" y="96" font-size="26" fill="#000" font-family="'Liberation Sans', sans-serif" textLength="244.2" lengthAdjust="spacingAndGlyphs" >ConsumerApplication</text>
<polygon points="2701.0,81.5 2719.0,81.5 2710,90.5" fill="#6e6e6e"/>
<path d="M2777,99.7 A10,10 0 1 1 2781,77.5" fill="none" stroke="#59a869" stroke-width="4.3"/><polygon points="2778,72 2789,79.5 2778,86.7" fill="#59a869"/>
<rect x="2776" y="89.5" width="10" height="10.2" fill="#6e6e6e" />
<ellipse cx="2826" cy="88.5" rx="8.7" ry="11.5" fill="#59a869"/>
<rect x="2814" y="80.6" width="24" height="3" fill="#59a869" />
<rect x="2814" y="87.0" width="24" height="3" fill="#59a869" />
<rect x="2814" y="93.6" width="24" height="3" fill="#59a869" />
<path d="M2821,73 L2826,78 L2830.8,73" fill="none" stroke="#59a869" stroke-width="3.2"/>
<rect x="2822" y="84.2" width="8" height="2.6" fill="#f2f2f2" />
<rect x="2822" y="90" width="8" height="2.8" fill="#f2f2f2" />
<path d="M2864,76 L2873.5,74 L2883.8,76 V81.5 H2880 V78.5 L2874,77.5 V94 L2877.5,91 V96 L2873.8,98 C2868,95 2864,90 2864,84 Z" fill="#6e6e6e"/><polygon points="2880,84 2893.5,92.8 2880,101.5" fill="#59a869"/>
<path d="M2932,80 A10,10 0 1 0 2922,95.5" fill="none" stroke="#6e6e6e" stroke-width="2.4"/><path d="M2923.5,78.5 V85 L2920,89" fill="none" stroke="#6e6e6e" stroke-width="1.8"/><polygon points="2928,84 2941.5,92.8 2928,101.5" fill="#59a869"/>
<polygon points="2956.0,83.6 2972.0,83.6 2964,91.6" fill="#6e6e6e"/>
<rect x="2994" y="76" width="20" height="20" fill="#db5860" />
<rect x="3036" y="66.5" width="2" height="38.5" fill="#cccccc" />
<circle cx="3065" cy="83" r="8.8" fill="none" stroke="#6e6e6e" stroke-width="3.4"/><path d="M3071.5,89.5 L3083,98.8" stroke="#6e6e6e" stroke-width="3.6"/>
<path d="M3133.80,83.12 L3133.80,88.48 L3130.32,89.01 L3130.09,89.56 L3132.19,92.39 L3128.39,96.19 L3125.56,94.09 L3125.01,94.32 L3124.48,97.80 L3119.12,97.80 L3118.59,94.32 L3118.04,94.09 L3115.21,96.19 L3111.41,92.39 L3113.51,89.56 L3113.28,89.01 L3109.80,88.48 L3109.80,83.12 L3113.28,82.59 L3113.51,82.04 L3111.41,79.21 L3115.21,75.41 L3118.04,77.51 L3118.59,77.28 L3119.12,73.80 L3124.48,73.80 L3125.01,77.28 L3125.56,77.51 L3128.39,75.41 L3132.19,79.21 L3130.09,82.04 L3130.32,82.59 Z M3126.4,85.8 A4.6,4.6 0 1 0 3117.2000000000003,85.8 A4.6,4.6 0 1 0 3126.4,85.8 Z" fill="#6e6e6e" fill-rule="evenodd"/>
<defs><linearGradient id="lg1" x1="0" y1="0" x2="1" y2="1"><stop offset="0" stop-color="#f9f03c"/><stop offset="0.5" stop-color="#3fd0a5"/><stop offset="1" stop-color="#08a3e8"/></linearGradient><linearGradient id="lg2" x1="0" y1="0" x2="0" y2="1"><stop offset="0" stop-color="#1fc8a8"/><stop offset="1" stop-color="#1049b8"/></linearGradient></defs>
<path d="M3160,72 C3172,72 3182,78 3188.5,84 C3182,91 3174,98 3162,100 C3157,92 3157,80 3160,72 Z" fill="url(#lg1)"/>
<path d="M3160,72 C3172,72 3182,78 3188.5,84 L3172,86 Z" fill="#26c3a4" opacity="0.8"/><path d="M3172,86 L3188.5,84 C3182,91 3174,98 3162,100 Z" fill="url(#lg2)"/>
<path d="M3041,1696 l2,4 M3030,1703 h24 M3035,1706 l2,5 M3049,1706 l-2,5 M3029,1713 h26 M3031,1720 h22 M3042,1713 v18" fill="none" stroke="#6b3636" stroke-width="3.2" stroke-linecap="round"/>
<path d="M3067,1704 h30 M3074,1698 v10 M3090,1698 v10 M3070,1712 h24 M3082,1707 v11 M3073,1720 h18 v11 h-18 z" fill="none" stroke="#6b3636" stroke-width="3.2" stroke-linecap="round"/>
<path d="M3106,1711 h9 v14 h-9 z M3118,1712 h10 M3124,1702 v26 q0,3 -3,2 M3118,1722 l10,-4 M3136,1701 l1,4 M3130,1708 h15 M3132,1712 l3,12 M3143,1711 l-3,13 M3129,1727 h17" fill="none" stroke="#6b3636" stroke-width="2.6" stroke-linecap="round"/>
<polygon points="2979.2,1779.6 2976.0,1784.3 2975.9,1789.9 2970.5,1791.8 2967.1,1796.2 2961.7,1794.6 2956.3,1796.2 2952.9,1791.8 2947.5,1789.9 2947.4,1784.3 2944.2,1779.6 2947.4,1774.9 2947.5,1769.3 2952.9,1767.4 2956.3,1763.0 2961.7,1764.5 2967.1,1763.0 2970.5,1767.4 2975.9,1769.3 2976.0,1774.9" fill="#6b3f2e" stroke="#6b3f2e" stroke-width="3" stroke-linejoin="round"/>
<polygon points="2979.2,1819.6 2976.0,1824.3 2975.9,1829.9 2970.5,1831.8 2967.1,1836.2 2961.7,1834.6 2956.3,1836.2 2952.9,1831.8 2947.5,1829.9 2947.4,1824.3 2944.2,1819.6 2947.4,1814.9 2947.5,1809.3 2952.9,1807.4 2956.3,1803.0 2961.7,1804.5 2967.1,1803.0 2970.5,1807.4 2975.9,1809.3 2976.0,1814.9" fill="#6b3f2e" stroke="#6b3f2e" stroke-width="3" stroke-linejoin="round"/>
<polygon points="2979.2,1859.6 2976.0,1864.3 2975.9,1869.9 2970.5,1871.8 2967.1,1876.2 2961.7,1874.6 2956.3,1876.2 2952.9,1871.8 2947.5,1869.9 2947.4,1864.3 2944.2,1859.6 2947.4,1854.9 2947.5,1849.3 2952.9,1847.4 2956.3,1843.0 2961.7,1844.5 2967.1,1843.0 2970.5,1847.4 2975.9,1849.3 2976.0,1854.9" fill="#6b3f2e" stroke="#6b3f2e" stroke-width="3" stroke-linejoin="round"/>
<text x="2953" y="1789" font-size="24" font-weight="bold" font-family="Liberation Serif, serif" fill="#fff">E</text>
<circle cx="2961.7" cy="1819.6" r="8" fill="#fff"/>
<path d="M2953,1853 l5,-3 h7.5 l5,3 l-2.5,4 l-2,-1 v10 h-9 v-10 l-2,1 z" fill="#fff"/>
<circle cx="3123.4" cy="1751" r="14.5" fill="#fff" stroke="#7a3b3b" stroke-width="2.2"/>
<circle cx="3183.2" cy="1785" r="12.5" fill="#fff" stroke="#7a3b3b" stroke-width="2.2"/>
<ellipse cx="3147" cy="1806" rx="43" ry="47.5" fill="#fff" stroke="#7a3b3b" stroke-width="2.4"/>
<circle cx="3170.3" cy="1793.3" r="2.6" fill="#f5d20a"/><ellipse cx="3164" cy="1788" rx="5" ry="5" fill="#f5d20a" stroke="#c9a800" stroke-width="1"/><ellipse cx="3176.2" cy="1798" rx="5" ry="5" fill="#f5d20a" stroke="#c9a800" stroke-width="1"/>
<path d="M3138,1810 q22,0 36,20" fill="none" stroke="#5a2a2a" stroke-width="4"/><path d="M3152,1814 l3,3 M3158,1819 l3,3" stroke="#fff" stroke-width="2"/>
<ellipse cx="3126" cy="1811" rx="4.5" ry="3" fill="#5a2a2a"/>
<ellipse cx="3154" cy="1836" rx="7" ry="5" fill="#fbc9c9"/>
<path d="M3102,1855 h48 l4,36 h-52 z" fill="#f7d800" stroke="#7a3b3b" stroke-width="2"/>
<ellipse cx="3125" cy="1896" rx="30" ry="8" fill="#fff" stroke="#7a3b3b" stroke-width="2"/>
<circle cx="3016" cy="1761.5" r="16" fill="#fde3e1" stroke="#7a3b3b" stroke-width="2.2"/>
<circle cx="3085.4" cy="1751" r="17" fill="#fde3e1" stroke="#7a3b3b" stroke-width="2.2"/>
<path d="M3016,1846 L3010,1900 h90 L3095,1846 z" fill="#fde3e1" stroke="#7a3b3b" stroke-width="2.2"/>
<path d="M3035,1860 l-3,30 M3055,1858 v33 M3075,1860 l3,30" fill="none" stroke="#7a3b3b" stroke-width="1.8"/>
<ellipse cx="3052.6" cy="1802" rx="66" ry="48.5" fill="#fde3e1" stroke="#7a3b3b" stroke-width="2.4"/>
<path d="M2991,1792 q16,-10 33,-2 q-16,14 -33,2 z" fill="#fff" stroke="#7a3b3b" stroke-width="2"/>
<path d="M3054,1788 q24,-9 47,-4 q-20,18 -47,4 z" fill="#fff" stroke="#7a3b3b" stroke-width="2"/>
<path d="M3003,1789 q8,-5 16,-1 l-2,3 q-6,-2 -12,1 z" fill="#4a1d1d"/><path d="M3062,1786 q12,-4 22,-2 l-2,4 q-8,-1 -16,1 z" fill="#4a1d1d"/>
<ellipse cx="3038" cy="1787" rx="4" ry="2.5" fill="#4a1d1d"/>
<path d="M3034,1808 q3,5 7,2 q3,-3 6,0 q4,3 7,-2" fill="none" stroke="#7a3b3b" stroke-width="1.8"/><path d="M3040,1811 q4,10 8,0 z" fill="#f29a9a"/>
<ellipse cx="3001.7" cy="1814.3" rx="7" ry="5" fill="#fbb9b9"/><ellipse cx="3090.7" cy="1807.5" rx="7" ry="5" fill="#fbb9b9"/>
<circle cx="3020" cy="1855" r="6" fill="#fff" stroke="#7a3b3b" stroke-width="1.8"/>
<path d="M3096,1840 q22,-8 34,6 q4,10 -8,10 q-14,-4 -26,0 z" fill="#fff" stroke="#7a3b3b" stroke-width="2"/>
<text x="3005.5" y="1891" font-size="21" font-family="Liberation Sans, sans-serif" fill="#d8d8d8" stroke="#8a8a8a" stroke-width="0.7" textLength="178" lengthAdjust="spacingAndGlyphs" opacity="0.85">CSDN @Ding Jiaxiong</text></svg></body></html>
